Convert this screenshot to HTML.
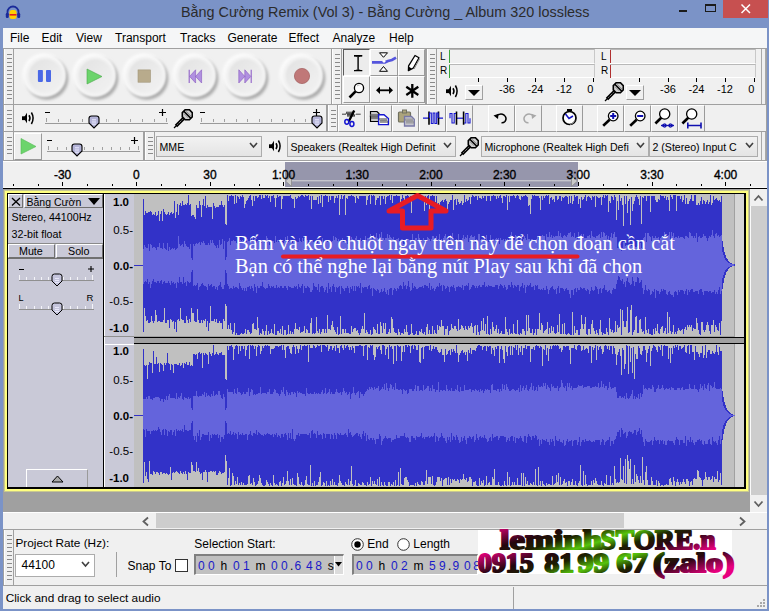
<!DOCTYPE html><html><head><meta charset="utf-8"><style>html,body{margin:0;padding:0;overflow:hidden}body{width:769px;height:611px;position:relative;background:#f0f0f0;font-family:'Liberation Sans', sans-serif}div,svg{box-sizing:border-box}</style></head><body>
<div style="position:absolute;left:0px;top:0px;width:769px;height:611px;background:#7b93c7"></div>
<svg style="position:absolute;left:5px;top:5px;" width="16" height="15" viewBox="0 0 16 15"><path d="M2.5 10 V7 A5.5 5.5 0 0 1 13.5 7 V10" fill="none" stroke="#1a2a9a" stroke-width="1.8"/><rect x="0.8" y="8" width="3" height="5" rx="1.2" fill="#1a2a9a"/><rect x="12.2" y="8" width="3" height="5" rx="1.2" fill="#1a2a9a"/><rect x="4.5" y="5" width="7" height="9" rx="2.5" fill="#ffd000"/><rect x="4.5" y="9" width="7" height="1.6" fill="#e02020"/></svg>
<div style="position:absolute;left:181px;top:5.37px;font-size:14.4px;line-height:14.4px;height:14.4px;color:#2b2b2b;white-space:nowrap;"><span style="position:relative;top:0">Bằng Cường Remix (Vol 3) - Bằng Cường _ Album 320 lossless</span></div>
<div style="position:absolute;left:679px;top:10px;width:8px;height:2px;background:#1b1b1b"></div>
<div style="position:absolute;left:705px;top:4px;width:11px;height:8px;border:1px solid #1b1b1b;border-top:2px solid #1b1b1b"></div>
<div style="position:absolute;left:723px;top:0px;width:45px;height:18px;background:#c75050"></div>
<svg style="position:absolute;left:739px;top:3px;" width="14" height="12" viewBox="0 0 14 12"><path d="M2.5 1.5 L11 10 M11 1.5 L2.5 10" stroke="#fff" stroke-width="1.5"/></svg>
<div style="position:absolute;left:3px;top:28px;width:764px;height:581px;background:#f0f0f0"></div>
<div style="position:absolute;left:3px;top:28px;width:764px;height:20px;background:#f5f6f7"></div>
<div style="position:absolute;left:3px;top:48px;width:764px;height:1px;background:#a0a0a0"></div>
<div style="position:absolute;left:10px;top:31.94px;font-size:12px;line-height:12px;height:12px;color:#000;white-space:nowrap;"><span style="position:relative;top:0">File</span></div>
<div style="position:absolute;left:41.5px;top:31.94px;font-size:12px;line-height:12px;height:12px;color:#000;white-space:nowrap;"><span style="position:relative;top:0">Edit</span></div>
<div style="position:absolute;left:76px;top:31.94px;font-size:12px;line-height:12px;height:12px;color:#000;white-space:nowrap;"><span style="position:relative;top:0">View</span></div>
<div style="position:absolute;left:115px;top:31.94px;font-size:12px;line-height:12px;height:12px;color:#000;white-space:nowrap;"><span style="position:relative;top:0">Transport</span></div>
<div style="position:absolute;left:180px;top:31.94px;font-size:12px;line-height:12px;height:12px;color:#000;white-space:nowrap;"><span style="position:relative;top:0">Tracks</span></div>
<div style="position:absolute;left:227.5px;top:31.94px;font-size:12px;line-height:12px;height:12px;color:#000;white-space:nowrap;"><span style="position:relative;top:0">Generate</span></div>
<div style="position:absolute;left:288.5px;top:31.94px;font-size:12px;line-height:12px;height:12px;color:#000;white-space:nowrap;"><span style="position:relative;top:0">Effect</span></div>
<div style="position:absolute;left:332.5px;top:31.94px;font-size:12px;line-height:12px;height:12px;color:#000;white-space:nowrap;"><span style="position:relative;top:0">Analyze</span></div>
<div style="position:absolute;left:389px;top:31.94px;font-size:12px;line-height:12px;height:12px;color:#000;white-space:nowrap;"><span style="position:relative;top:0">Help</span></div>
<div style="position:absolute;left:3px;top:49px;width:329px;height:56px;border-right:1px solid #a0a0a0;border-bottom:1px solid #a0a0a0"></div>
<div style="position:absolute;left:3px;top:49px;width:11px;height:55px;border-left:1px solid #a0a0a0;border-right:1px solid #a0a0a0"></div><div style="position:absolute;left:4px;top:49px;width:1px;height:55px;background:#fff"></div><div style="position:absolute;left:7px;top:54px;width:5px;height:1px;background:#8a8a8a"></div><div style="position:absolute;left:7px;top:58px;width:5px;height:1px;background:#8a8a8a"></div><div style="position:absolute;left:7px;top:62px;width:5px;height:1px;background:#8a8a8a"></div><div style="position:absolute;left:7px;top:66px;width:5px;height:1px;background:#8a8a8a"></div><div style="position:absolute;left:7px;top:70px;width:5px;height:1px;background:#8a8a8a"></div><div style="position:absolute;left:7px;top:74px;width:5px;height:1px;background:#8a8a8a"></div><div style="position:absolute;left:7px;top:78px;width:5px;height:1px;background:#8a8a8a"></div><div style="position:absolute;left:7px;top:82px;width:5px;height:1px;background:#8a8a8a"></div><div style="position:absolute;left:7px;top:86px;width:5px;height:1px;background:#8a8a8a"></div><div style="position:absolute;left:7px;top:90px;width:5px;height:1px;background:#8a8a8a"></div><div style="position:absolute;left:7px;top:94px;width:5px;height:1px;background:#8a8a8a"></div><div style="position:absolute;left:7px;top:98px;width:5px;height:1px;background:#8a8a8a"></div>
<svg style="position:absolute;left:18.5px;top:50px;" width="52" height="52" viewBox="0 0 52 52"><defs><filter id="b44" x="-30%" y="-30%" width="160%" height="160%"><feGaussianBlur stdDeviation="1.4"/></filter><filter id="c44" x="-30%" y="-30%" width="160%" height="160%"><feGaussianBlur stdDeviation="0.9"/></filter><linearGradient id="l44" x1="0" y1="0" x2="1" y2="1"><stop offset="0" stop-color="#e2e2e2"/><stop offset="1" stop-color="#f2f2f2"/></linearGradient></defs><circle cx="27.8" cy="28.2" r="21.5" fill="#a8a8a8" filter="url(#b44)"/><circle cx="25" cy="25" r="21.5" fill="#fdfdfd" filter="url(#b44)"/><circle cx="26" cy="26" r="20" fill="#f3f3f3" filter="url(#c44)"/><circle cx="26.5" cy="26" r="17" fill="url(#l44)" filter="url(#c44)"/><rect x="18.9" y="19.9" width="5" height="12" rx="0.8" fill="#4a68e6" transform="translate(0,0)"/><rect x="27" y="19.9" width="5" height="12" rx="0.8" fill="#4a68e6"/></svg>
<svg style="position:absolute;left:69px;top:50px;" width="52" height="52" viewBox="0 0 52 52"><defs><filter id="b95" x="-30%" y="-30%" width="160%" height="160%"><feGaussianBlur stdDeviation="1.4"/></filter><filter id="c95" x="-30%" y="-30%" width="160%" height="160%"><feGaussianBlur stdDeviation="0.9"/></filter><linearGradient id="l95" x1="0" y1="0" x2="1" y2="1"><stop offset="0" stop-color="#e2e2e2"/><stop offset="1" stop-color="#f2f2f2"/></linearGradient></defs><circle cx="27.8" cy="28.2" r="21.5" fill="#a8a8a8" filter="url(#b95)"/><circle cx="25" cy="25" r="21.5" fill="#fdfdfd" filter="url(#b95)"/><circle cx="26" cy="26" r="20" fill="#f3f3f3" filter="url(#c95)"/><circle cx="26.5" cy="26" r="17" fill="url(#l95)" filter="url(#c95)"/><path d="M18 19 L33 26.5 L18 34 Z" fill="#6cd46c" stroke="#4aa84a" stroke-width="0.6"/></svg>
<svg style="position:absolute;left:119px;top:50px;" width="52" height="52" viewBox="0 0 52 52"><defs><filter id="b145" x="-30%" y="-30%" width="160%" height="160%"><feGaussianBlur stdDeviation="1.4"/></filter><filter id="c145" x="-30%" y="-30%" width="160%" height="160%"><feGaussianBlur stdDeviation="0.9"/></filter><linearGradient id="l145" x1="0" y1="0" x2="1" y2="1"><stop offset="0" stop-color="#e2e2e2"/><stop offset="1" stop-color="#f2f2f2"/></linearGradient></defs><circle cx="27.8" cy="28.2" r="21.5" fill="#a8a8a8" filter="url(#b145)"/><circle cx="25" cy="25" r="21.5" fill="#fdfdfd" filter="url(#b145)"/><circle cx="26" cy="26" r="20" fill="#f3f3f3" filter="url(#c145)"/><circle cx="26.5" cy="26" r="17" fill="url(#l145)" filter="url(#c145)"/><rect x="19" y="19.9" width="12.5" height="12.3" fill="#b8ab8c" stroke="#a09478" stroke-width="0.6"/></svg>
<svg style="position:absolute;left:168.5px;top:50px;" width="52" height="52" viewBox="0 0 52 52"><defs><filter id="b194" x="-30%" y="-30%" width="160%" height="160%"><feGaussianBlur stdDeviation="1.4"/></filter><filter id="c194" x="-30%" y="-30%" width="160%" height="160%"><feGaussianBlur stdDeviation="0.9"/></filter><linearGradient id="l194" x1="0" y1="0" x2="1" y2="1"><stop offset="0" stop-color="#e2e2e2"/><stop offset="1" stop-color="#f2f2f2"/></linearGradient></defs><circle cx="27.8" cy="28.2" r="21.5" fill="#a8a8a8" filter="url(#b194)"/><circle cx="25" cy="25" r="21.5" fill="#fdfdfd" filter="url(#b194)"/><circle cx="26" cy="26" r="20" fill="#f3f3f3" filter="url(#c194)"/><circle cx="26.5" cy="26" r="17" fill="url(#l194)" filter="url(#c194)"/><path d="M20.2 19.8 V33" stroke="#9060c8" stroke-width="1.1"/><path d="M26.6 19.8 L20.6 26.4 L26.6 33 Z M32.6 19.8 L26.6 26.4 L32.6 33 Z" fill="#b090e0" stroke="#8858c0" stroke-width="0.6"/></svg>
<svg style="position:absolute;left:218.7px;top:50px;" width="52" height="52" viewBox="0 0 52 52"><defs><filter id="b244" x="-30%" y="-30%" width="160%" height="160%"><feGaussianBlur stdDeviation="1.4"/></filter><filter id="c244" x="-30%" y="-30%" width="160%" height="160%"><feGaussianBlur stdDeviation="0.9"/></filter><linearGradient id="l244" x1="0" y1="0" x2="1" y2="1"><stop offset="0" stop-color="#e2e2e2"/><stop offset="1" stop-color="#f2f2f2"/></linearGradient></defs><circle cx="27.8" cy="28.2" r="21.5" fill="#a8a8a8" filter="url(#b244)"/><circle cx="25" cy="25" r="21.5" fill="#fdfdfd" filter="url(#b244)"/><circle cx="26" cy="26" r="20" fill="#f3f3f3" filter="url(#c244)"/><circle cx="26.5" cy="26" r="17" fill="url(#l244)" filter="url(#c244)"/><path d="M32.2 19.8 V33" stroke="#9060c8" stroke-width="1.1"/><path d="M19.8 19.8 L25.8 26.4 L19.8 33 Z M25.8 19.8 L31.8 26.4 L25.8 33 Z" fill="#b090e0" stroke="#8858c0" stroke-width="0.6"/></svg>
<svg style="position:absolute;left:276px;top:50px;" width="52" height="52" viewBox="0 0 52 52"><defs><filter id="b302" x="-30%" y="-30%" width="160%" height="160%"><feGaussianBlur stdDeviation="1.4"/></filter><filter id="c302" x="-30%" y="-30%" width="160%" height="160%"><feGaussianBlur stdDeviation="0.9"/></filter><linearGradient id="l302" x1="0" y1="0" x2="1" y2="1"><stop offset="0" stop-color="#e2e2e2"/><stop offset="1" stop-color="#f2f2f2"/></linearGradient></defs><circle cx="27.8" cy="28.2" r="21.5" fill="#a8a8a8" filter="url(#b302)"/><circle cx="25" cy="25" r="21.5" fill="#fdfdfd" filter="url(#b302)"/><circle cx="26" cy="26" r="20" fill="#f3f3f3" filter="url(#c302)"/><circle cx="26.5" cy="26" r="17" fill="url(#l302)" filter="url(#c302)"/><circle cx="26" cy="26" r="7.6" fill="#c07878" stroke="#a05a5a" stroke-width="0.7"/></svg>
<div style="position:absolute;left:331px;top:49px;width:95px;height:56px;border-right:1px solid #a0a0a0;border-bottom:1px solid #a0a0a0"></div>
<div style="position:absolute;left:331px;top:49px;width:11px;height:55px;border-left:1px solid #a0a0a0;border-right:1px solid #a0a0a0"></div><div style="position:absolute;left:332px;top:49px;width:1px;height:55px;background:#fff"></div><div style="position:absolute;left:335px;top:54px;width:5px;height:1px;background:#8a8a8a"></div><div style="position:absolute;left:335px;top:58px;width:5px;height:1px;background:#8a8a8a"></div><div style="position:absolute;left:335px;top:62px;width:5px;height:1px;background:#8a8a8a"></div><div style="position:absolute;left:335px;top:66px;width:5px;height:1px;background:#8a8a8a"></div><div style="position:absolute;left:335px;top:70px;width:5px;height:1px;background:#8a8a8a"></div><div style="position:absolute;left:335px;top:74px;width:5px;height:1px;background:#8a8a8a"></div><div style="position:absolute;left:335px;top:78px;width:5px;height:1px;background:#8a8a8a"></div><div style="position:absolute;left:335px;top:82px;width:5px;height:1px;background:#8a8a8a"></div><div style="position:absolute;left:335px;top:86px;width:5px;height:1px;background:#8a8a8a"></div><div style="position:absolute;left:335px;top:90px;width:5px;height:1px;background:#8a8a8a"></div><div style="position:absolute;left:335px;top:94px;width:5px;height:1px;background:#8a8a8a"></div><div style="position:absolute;left:335px;top:98px;width:5px;height:1px;background:#8a8a8a"></div>
<div style="position:absolute;left:343px;top:49px;width:27px;height:27px;background:#ececec;border-top:1px solid #5a5a5a;border-left:1px solid #5a5a5a;border-right:1px solid #fff;border-bottom:1px solid #fff"></div>
<div style="position:absolute;left:370px;top:49px;width:28px;height:27px;background:#efefef;border-top:1px solid #fff;border-left:1px solid #fff;border-right:1px solid #9a9a9a;border-bottom:1px solid #9a9a9a"></div>
<div style="position:absolute;left:398px;top:49px;width:27px;height:27px;background:#efefef;border-top:1px solid #fff;border-left:1px solid #fff;border-right:1px solid #9a9a9a;border-bottom:1px solid #9a9a9a"></div>
<div style="position:absolute;left:343px;top:76px;width:27px;height:27px;background:#efefef;border-top:1px solid #fff;border-left:1px solid #fff;border-right:1px solid #9a9a9a;border-bottom:1px solid #9a9a9a"></div>
<div style="position:absolute;left:370px;top:76px;width:28px;height:27px;background:#efefef;border-top:1px solid #fff;border-left:1px solid #fff;border-right:1px solid #9a9a9a;border-bottom:1px solid #9a9a9a"></div>
<div style="position:absolute;left:398px;top:76px;width:27px;height:27px;background:#efefef;border-top:1px solid #fff;border-left:1px solid #fff;border-right:1px solid #9a9a9a;border-bottom:1px solid #9a9a9a"></div>
<svg style="position:absolute;left:343px;top:49px;" width="27" height="27" viewBox="0 0 27 27"><path d="M11 6.8 H19.2 M15.1 6.8 V21.6 M11 21.6 H19.2" stroke="#000" stroke-width="1.4" fill="none"/><path d="M11 6.8 Q13 6.8 14.4 7.6 M19.2 6.8 Q17.2 6.8 15.8 7.6 M11 21.6 Q13 21.6 14.4 20.8 M19.2 21.6 Q17.2 21.6 15.8 20.8" stroke="#000" stroke-width="0.9" fill="none"/></svg>
<svg style="position:absolute;left:370px;top:49px;" width="28" height="27" viewBox="0 0 28 27"><path d="M9.5 3.8 H17.5 L13.5 8.3 Z M9.5 22.3 H17.5 L13.5 17.5 Z" fill="#fff" stroke="#000" stroke-width="1"/><path d="M2 13.3 L15 13.3 L18 12 L22 11 L26 8.6" stroke="#5555dd" stroke-width="2.8" fill="none"/><circle cx="14" cy="12.3" r="1.4" fill="#fff"/></svg>
<svg style="position:absolute;left:398px;top:49px;" width="27" height="27" viewBox="0 0 27 27"><path d="M17 6.5 L21 8.8 L15.2 19.2 L10.4 21.6 L10.6 16.8 Z" fill="#fff" stroke="#000" stroke-width="1.3" stroke-linejoin="round"/><path d="M10.4 21.6 L10.6 17.6 L13.6 19.5 Z" fill="#000"/><path d="M21.5 10 L16 20" stroke="#888" stroke-width="1"/></svg>
<svg style="position:absolute;left:343px;top:76px;" width="27" height="27" viewBox="0 0 27 27"><circle cx="16" cy="12" r="4.6" fill="#fff" stroke="#000" stroke-width="1.3"/><path d="M12.6 15.4 L6.5 21.5" stroke="#000" stroke-width="2.6"/><path d="M14 10 Q15 9 16.5 9.2" stroke="#aaa" stroke-width="0.8" fill="none"/></svg>
<svg style="position:absolute;left:370px;top:76px;" width="28" height="27" viewBox="0 0 28 27"><path d="M8 14.3 H21" stroke="#000" stroke-width="1.8"/><path d="M6 14.3 L10 10.6 V18 Z M23 14.3 L19 10.6 V18 Z" fill="#000"/></svg>
<svg style="position:absolute;left:398px;top:76px;" width="27" height="27" viewBox="0 0 27 27"><path d="M14.3 8 V21.7 M8.3 10.8 L20.3 19 M20.3 10.8 L8.3 19" stroke="#000" stroke-width="2.3"/></svg>
<div style="position:absolute;left:426px;top:49px;width:341px;height:56px;border-right:1px solid #a0a0a0;border-bottom:1px solid #a0a0a0"></div>
<div style="position:absolute;left:426px;top:49px;width:11px;height:55px;border-left:1px solid #a0a0a0;border-right:1px solid #a0a0a0"></div><div style="position:absolute;left:427px;top:49px;width:1px;height:55px;background:#fff"></div><div style="position:absolute;left:430px;top:54px;width:5px;height:1px;background:#8a8a8a"></div><div style="position:absolute;left:430px;top:58px;width:5px;height:1px;background:#8a8a8a"></div><div style="position:absolute;left:430px;top:62px;width:5px;height:1px;background:#8a8a8a"></div><div style="position:absolute;left:430px;top:66px;width:5px;height:1px;background:#8a8a8a"></div><div style="position:absolute;left:430px;top:70px;width:5px;height:1px;background:#8a8a8a"></div><div style="position:absolute;left:430px;top:74px;width:5px;height:1px;background:#8a8a8a"></div><div style="position:absolute;left:430px;top:78px;width:5px;height:1px;background:#8a8a8a"></div><div style="position:absolute;left:430px;top:82px;width:5px;height:1px;background:#8a8a8a"></div><div style="position:absolute;left:430px;top:86px;width:5px;height:1px;background:#8a8a8a"></div><div style="position:absolute;left:430px;top:90px;width:5px;height:1px;background:#8a8a8a"></div><div style="position:absolute;left:430px;top:94px;width:5px;height:1px;background:#8a8a8a"></div><div style="position:absolute;left:430px;top:98px;width:5px;height:1px;background:#8a8a8a"></div>
<div style="position:absolute;left:761px;top:49px;width:1px;height:55px;background:#a8a8a8"></div>
<div style="position:absolute;left:765px;top:49px;width:1px;height:55px;background:#a8a8a8"></div>
<div style="position:absolute;left:440px;top:52.25px;font-size:10px;line-height:10px;height:10px;color:#000;white-space:nowrap;"><span style="position:relative;top:0">L</span></div><div style="position:absolute;left:440px;top:66.25px;font-size:10px;line-height:10px;height:10px;color:#000;white-space:nowrap;"><span style="position:relative;top:0">R</span></div><div style="position:absolute;left:449px;top:49px;width:146px;height:15px;background:#f0f0f0;border-top:1px solid #b8b8b8;border-right:1px solid #c8c8c8;border-bottom:1px solid #fff"></div><div style="position:absolute;left:449px;top:64px;width:146px;height:14px;background:#f0f0f0;border-top:1px solid #b8b8b8;border-right:1px solid #c8c8c8;border-bottom:1px solid #fff"></div><div style="position:absolute;left:449px;top:50px;width:1px;height:13px;background:#3aa83a"></div><div style="position:absolute;left:449px;top:65px;width:1px;height:13px;background:#3aa83a"></div>
<div style="position:absolute;left:601px;top:52.25px;font-size:10px;line-height:10px;height:10px;color:#000;white-space:nowrap;"><span style="position:relative;top:0">L</span></div><div style="position:absolute;left:601px;top:66.25px;font-size:10px;line-height:10px;height:10px;color:#000;white-space:nowrap;"><span style="position:relative;top:0">R</span></div><div style="position:absolute;left:610px;top:49px;width:146px;height:15px;background:#f0f0f0;border-top:1px solid #b8b8b8;border-right:1px solid #c8c8c8;border-bottom:1px solid #fff"></div><div style="position:absolute;left:610px;top:64px;width:146px;height:14px;background:#f0f0f0;border-top:1px solid #b8b8b8;border-right:1px solid #c8c8c8;border-bottom:1px solid #fff"></div><div style="position:absolute;left:610px;top:50px;width:1px;height:13px;background:#b03030"></div><div style="position:absolute;left:610px;top:65px;width:1px;height:13px;background:#b03030"></div>
<div style="position:absolute;left:478px;top:78px;width:1px;height:4px;background:#000"></div><div style="position:absolute;left:507px;top:78px;width:1px;height:4px;background:#000"></div><div style="position:absolute;left:535px;top:78px;width:1px;height:4px;background:#000"></div><div style="position:absolute;left:564px;top:78px;width:1px;height:4px;background:#000"></div><div style="position:absolute;left:593px;top:78px;width:1px;height:4px;background:#000"></div>
<div style="position:absolute;left:639px;top:78px;width:1px;height:4px;background:#000"></div><div style="position:absolute;left:668px;top:78px;width:1px;height:4px;background:#000"></div><div style="position:absolute;left:696px;top:78px;width:1px;height:4px;background:#000"></div><div style="position:absolute;left:725px;top:78px;width:1px;height:4px;background:#000"></div><div style="position:absolute;left:754px;top:78px;width:1px;height:4px;background:#000"></div>
<div style="position:absolute;left:499px;top:83.84px;font-size:11px;line-height:11px;height:11px;color:#000;white-space:nowrap;"><span style="position:relative;top:0">-36</span></div>
<div style="position:absolute;left:527.5px;top:83.84px;font-size:11px;line-height:11px;height:11px;color:#000;white-space:nowrap;"><span style="position:relative;top:0">-24</span></div>
<div style="position:absolute;left:556px;top:83.84px;font-size:11px;line-height:11px;height:11px;color:#000;white-space:nowrap;"><span style="position:relative;top:0">-12</span></div>
<div style="position:absolute;left:587.3px;top:83.84px;font-size:11px;line-height:11px;height:11px;color:#000;white-space:nowrap;"><span style="position:relative;top:0">0</span></div>
<div style="position:absolute;left:660px;top:83.84px;font-size:11px;line-height:11px;height:11px;color:#000;white-space:nowrap;"><span style="position:relative;top:0">-36</span></div>
<div style="position:absolute;left:688.5px;top:83.84px;font-size:11px;line-height:11px;height:11px;color:#000;white-space:nowrap;"><span style="position:relative;top:0">-24</span></div>
<div style="position:absolute;left:717px;top:83.84px;font-size:11px;line-height:11px;height:11px;color:#000;white-space:nowrap;"><span style="position:relative;top:0">-12</span></div>
<div style="position:absolute;left:748.2px;top:83.84px;font-size:11px;line-height:11px;height:11px;color:#000;white-space:nowrap;"><span style="position:relative;top:0">0</span></div>
<svg style="position:absolute;left:445px;top:84px;" width="15" height="15" viewBox="0 0 15 15"><rect x="1" y="5.3" width="3" height="3.8" fill="#000"/><path d="M3.8 5.3 L6 1.8 V12.3 L3.8 9 Z" fill="#000"/><path d="M8 4.3 Q10 7.2 8 10.2" stroke="#000" stroke-width="1.5" fill="none"/><path d="M10.4 1.5 Q13.8 7.2 10.4 13" stroke="#000" stroke-width="1.5" fill="none"/></svg>
<div style="position:absolute;left:465px;top:85px;width:18px;height:15px;background:#f0f0f0;border-top:1px solid #fff;border-left:1px solid #fff;border-right:1px solid #a0a0a0;border-bottom:1px solid #a0a0a0"></div><svg style="position:absolute;left:468px;top:90px;" width="12" height="7" viewBox="0 0 12 7"><path d="M0 0 H12 L6.0 6 Z" fill="#000"/></svg>
<svg style="position:absolute;left:604px;top:82px;" width="20" height="20" viewBox="0 0 20 20"><path d="M1 19 L3.5 16.5" stroke="#000" stroke-width="1.3"/><path d="M3 17 L10.5 9.5" stroke="#000" stroke-width="3.4"/><path d="M4.5 15.5 L10 10" stroke="#fff" stroke-width="0.8" stroke-dasharray="1 1"/><polygon points="12.2,0.7 16.4,0.7 19.3,3.6 19.3,7.8 16.4,10.7 12.2,10.7 9.3,7.8 9.3,3.6" fill="#cfcfcf" stroke="#000" stroke-width="1.6"/><path d="M10.8 2.2 L17.8 9.2" stroke="#000" stroke-width="1.6"/><path d="M13.2 2.4 L18 7.2 M11 4.6 L15.2 8.8" stroke="#8a8a8a" stroke-width="1"/></svg>
<div style="position:absolute;left:626px;top:85px;width:18px;height:15px;background:#f0f0f0;border-top:1px solid #fff;border-left:1px solid #fff;border-right:1px solid #a0a0a0;border-bottom:1px solid #a0a0a0"></div><svg style="position:absolute;left:629px;top:90px;" width="12" height="7" viewBox="0 0 12 7"><path d="M0 0 H12 L6.0 6 Z" fill="#000"/></svg>
<div style="position:absolute;left:3px;top:105px;width:324px;height:27px;border-right:1px solid #a0a0a0;border-bottom:1px solid #a0a0a0"></div>
<div style="position:absolute;left:3px;top:105px;width:11px;height:26px;border-left:1px solid #a0a0a0;border-right:1px solid #a0a0a0"></div><div style="position:absolute;left:4px;top:105px;width:1px;height:26px;background:#fff"></div><div style="position:absolute;left:7px;top:110px;width:5px;height:1px;background:#8a8a8a"></div><div style="position:absolute;left:7px;top:114px;width:5px;height:1px;background:#8a8a8a"></div><div style="position:absolute;left:7px;top:118px;width:5px;height:1px;background:#8a8a8a"></div><div style="position:absolute;left:7px;top:122px;width:5px;height:1px;background:#8a8a8a"></div><div style="position:absolute;left:7px;top:126px;width:5px;height:1px;background:#8a8a8a"></div>
<svg style="position:absolute;left:21px;top:111px;" width="15" height="15" viewBox="0 0 15 15"><rect x="1" y="5.3" width="3" height="3.8" fill="#000"/><path d="M3.8 5.3 L6 1.8 V12.3 L3.8 9 Z" fill="#000"/><path d="M8 4.3 Q10 7.2 8 10.2" stroke="#000" stroke-width="1.5" fill="none"/><path d="M10.4 1.5 Q13.8 7.2 10.4 13" stroke="#000" stroke-width="1.5" fill="none"/></svg>
<div style="position:absolute;left:45px;top:123px;width:123px;height:1px;background:#9a9a9a"></div><div style="position:absolute;left:46px;top:118px;width:1px;height:4px;background:#a0a0a0"></div><div style="position:absolute;left:58px;top:119px;width:1px;height:3px;background:#a0a0a0"></div><div style="position:absolute;left:70px;top:119px;width:1px;height:3px;background:#a0a0a0"></div><div style="position:absolute;left:82px;top:119px;width:1px;height:3px;background:#a0a0a0"></div><div style="position:absolute;left:94px;top:119px;width:1px;height:3px;background:#a0a0a0"></div><div style="position:absolute;left:106px;top:119px;width:1px;height:3px;background:#a0a0a0"></div><div style="position:absolute;left:118px;top:119px;width:1px;height:3px;background:#a0a0a0"></div><div style="position:absolute;left:130px;top:119px;width:1px;height:3px;background:#a0a0a0"></div><div style="position:absolute;left:142px;top:119px;width:1px;height:3px;background:#a0a0a0"></div><div style="position:absolute;left:154px;top:119px;width:1px;height:3px;background:#a0a0a0"></div><div style="position:absolute;left:166px;top:118px;width:1px;height:4px;background:#a0a0a0"></div><svg style="position:absolute;left:88px;top:115px;" width="12" height="14" viewBox="0 0 12 14"><path d="M1 3.5 Q1 1 3.5 1 H8.5 Q11 1 11 3.5 V8 L6 13 L1 8 Z" fill="#b4b4d8" stroke="#000" stroke-width="1.1"/><path d="M4 4.8 H8 M4 7 H8 M4 9.2 H8" stroke="#ececff" stroke-width="1"/></svg>
<div style="position:absolute;left:45px;top:112px;width:5px;height:1px;background:#000"></div>
<svg style="position:absolute;left:159px;top:109px;" width="7" height="7" viewBox="0 0 7 7"><path d="M3.5 0 V7 M0 3.5 H7" stroke="#000" stroke-width="1.2"/></svg>
<svg style="position:absolute;left:173px;top:109px;" width="20" height="20" viewBox="0 0 20 20"><path d="M1 19 L3.5 16.5" stroke="#000" stroke-width="1.3"/><path d="M3 17 L10.5 9.5" stroke="#000" stroke-width="3.4"/><path d="M4.5 15.5 L10 10" stroke="#fff" stroke-width="0.8" stroke-dasharray="1 1"/><polygon points="12.2,0.7 16.4,0.7 19.3,3.6 19.3,7.8 16.4,10.7 12.2,10.7 9.3,7.8 9.3,3.6" fill="#cfcfcf" stroke="#000" stroke-width="1.6"/><path d="M10.8 2.2 L17.8 9.2" stroke="#000" stroke-width="1.6"/><path d="M13.2 2.4 L18 7.2 M11 4.6 L15.2 8.8" stroke="#8a8a8a" stroke-width="1"/></svg>
<div style="position:absolute;left:200px;top:123px;width:119px;height:1px;background:#9a9a9a"></div><div style="position:absolute;left:201px;top:118px;width:1px;height:4px;background:#a0a0a0"></div><div style="position:absolute;left:213px;top:119px;width:1px;height:3px;background:#a0a0a0"></div><div style="position:absolute;left:224px;top:119px;width:1px;height:3px;background:#a0a0a0"></div><div style="position:absolute;left:236px;top:119px;width:1px;height:3px;background:#a0a0a0"></div><div style="position:absolute;left:247px;top:119px;width:1px;height:3px;background:#a0a0a0"></div><div style="position:absolute;left:259px;top:119px;width:1px;height:3px;background:#a0a0a0"></div><div style="position:absolute;left:271px;top:119px;width:1px;height:3px;background:#a0a0a0"></div><div style="position:absolute;left:282px;top:119px;width:1px;height:3px;background:#a0a0a0"></div><div style="position:absolute;left:294px;top:119px;width:1px;height:3px;background:#a0a0a0"></div><div style="position:absolute;left:305px;top:119px;width:1px;height:3px;background:#a0a0a0"></div><div style="position:absolute;left:317px;top:118px;width:1px;height:4px;background:#a0a0a0"></div><svg style="position:absolute;left:311px;top:115px;" width="12" height="14" viewBox="0 0 12 14"><path d="M1 3.5 Q1 1 3.5 1 H8.5 Q11 1 11 3.5 V8 L6 13 L1 8 Z" fill="#b4b4d8" stroke="#000" stroke-width="1.1"/><path d="M4 4.8 H8 M4 7 H8 M4 9.2 H8" stroke="#ececff" stroke-width="1"/></svg>
<div style="position:absolute;left:200px;top:112px;width:5px;height:1px;background:#000"></div>
<svg style="position:absolute;left:313px;top:109px;" width="7" height="7" viewBox="0 0 7 7"><path d="M3.5 0 V7 M0 3.5 H7" stroke="#000" stroke-width="1.2"/></svg>
<div style="position:absolute;left:327px;top:105px;width:440px;height:27px;border-right:1px solid #a0a0a0;border-bottom:1px solid #a0a0a0"></div>
<div style="position:absolute;left:327px;top:105px;width:11px;height:26px;border-left:1px solid #a0a0a0;border-right:1px solid #a0a0a0"></div><div style="position:absolute;left:328px;top:105px;width:1px;height:26px;background:#fff"></div><div style="position:absolute;left:331px;top:110px;width:5px;height:1px;background:#8a8a8a"></div><div style="position:absolute;left:331px;top:114px;width:5px;height:1px;background:#8a8a8a"></div><div style="position:absolute;left:331px;top:118px;width:5px;height:1px;background:#8a8a8a"></div><div style="position:absolute;left:331px;top:122px;width:5px;height:1px;background:#8a8a8a"></div><div style="position:absolute;left:331px;top:126px;width:5px;height:1px;background:#8a8a8a"></div>
<div style="position:absolute;left:338px;top:105px;width:27px;height:27px;background:#efefef;border-top:1px solid #fff;border-left:1px solid #fff;border-right:1px solid #9a9a9a;border-bottom:1px solid #9a9a9a"></div>
<div style="position:absolute;left:365px;top:105px;width:27px;height:27px;background:#efefef;border-top:1px solid #fff;border-left:1px solid #fff;border-right:1px solid #9a9a9a;border-bottom:1px solid #9a9a9a"></div>
<div style="position:absolute;left:392px;top:105px;width:27px;height:27px;background:#efefef;border-top:1px solid #fff;border-left:1px solid #fff;border-right:1px solid #9a9a9a;border-bottom:1px solid #9a9a9a"></div>
<div style="position:absolute;left:419px;top:105px;width:27px;height:27px;background:#efefef;border-top:1px solid #fff;border-left:1px solid #fff;border-right:1px solid #9a9a9a;border-bottom:1px solid #9a9a9a"></div>
<div style="position:absolute;left:446px;top:105px;width:27px;height:27px;background:#efefef;border-top:1px solid #fff;border-left:1px solid #fff;border-right:1px solid #9a9a9a;border-bottom:1px solid #9a9a9a"></div>
<div style="position:absolute;left:488px;top:105px;width:27px;height:27px;background:#efefef;border-top:1px solid #fff;border-left:1px solid #fff;border-right:1px solid #9a9a9a;border-bottom:1px solid #9a9a9a"></div>
<div style="position:absolute;left:515px;top:105px;width:27px;height:27px;background:#efefef;border-top:1px solid #fff;border-left:1px solid #fff;border-right:1px solid #9a9a9a;border-bottom:1px solid #9a9a9a"></div>
<div style="position:absolute;left:556px;top:105px;width:27px;height:27px;background:#efefef;border-top:1px solid #fff;border-left:1px solid #fff;border-right:1px solid #9a9a9a;border-bottom:1px solid #9a9a9a"></div>
<div style="position:absolute;left:597px;top:105px;width:27px;height:27px;background:#efefef;border-top:1px solid #fff;border-left:1px solid #fff;border-right:1px solid #9a9a9a;border-bottom:1px solid #9a9a9a"></div>
<div style="position:absolute;left:624px;top:105px;width:27px;height:27px;background:#efefef;border-top:1px solid #fff;border-left:1px solid #fff;border-right:1px solid #9a9a9a;border-bottom:1px solid #9a9a9a"></div>
<div style="position:absolute;left:651px;top:105px;width:27px;height:27px;background:#efefef;border-top:1px solid #fff;border-left:1px solid #fff;border-right:1px solid #9a9a9a;border-bottom:1px solid #9a9a9a"></div>
<div style="position:absolute;left:678px;top:105px;width:27px;height:27px;background:#efefef;border-top:1px solid #fff;border-left:1px solid #fff;border-right:1px solid #9a9a9a;border-bottom:1px solid #9a9a9a"></div>
<svg style="position:absolute;left:338px;top:105px;" width="27" height="27" viewBox="0 0 27 27"><path d="M4 9.2 H8 M18 9.2 H22.7" stroke="#404040" stroke-width="1"/><path d="M8 9.2 l1 -2.5 l1 5 l1 -5 l1 5 l1 -5 l1 5 l1 -5 l1 5 l1 -2.5" stroke="#404040" stroke-width="1" fill="none"/><path d="M16.2 5.5 L11.6 14.8 L10.6 16.5" stroke="#000" stroke-width="2.4"/><ellipse cx="8.8" cy="16.8" rx="2" ry="2.4" stroke="#1515d0" stroke-width="1.5" fill="none"/><ellipse cx="13.9" cy="19" rx="2" ry="2.4" stroke="#1515d0" stroke-width="1.5" fill="none"/></svg>
<svg style="position:absolute;left:365px;top:105px;" width="27" height="27" viewBox="0 0 27 27"><path d="M5.5 6.5 H12 L14 8.5 V16.5 H5.5 Z" fill="#c8c8c8" stroke="#000" stroke-width="1.2"/><path d="M5 11.5 l1 -2.5 l1 5 l1 -5 l1 5 l1 -5 l1 5 l1 -5 l1 5 l1 -2.5" stroke="#555" stroke-width="0.8" fill="none"/><path d="M13.6 9.8 H19 L23.4 13.5 V19.6 H13.6 Z" fill="#fff" stroke="#1515d0" stroke-width="1.4"/><path d="M14 15.5 l1 -2.5 l1 5 l1 -5 l1 5 l1 -5 l1 5 l1 -5 l1 5 l1 -2.5" stroke="#666" stroke-width="0.8" fill="none"/></svg>
<svg style="position:absolute;left:392px;top:105px;" width="27" height="27" viewBox="0 0 27 27"><rect x="6.5" y="7" width="12" height="10" rx="1" fill="#aca47c" stroke="#707060" stroke-width="1.2"/><rect x="10.5" y="5" width="4" height="3" fill="#aca47c" stroke="#707060" stroke-width="1"/><path d="M12.5 11.5 H19.5 L22.3 14.3 V21 H12.5 Z" fill="#c4c4cc" stroke="#7878a8" stroke-width="1.3"/><path d="M13 16 l1 -2.5 l1 5 l1 -5 l1 5 l1 -5 l1 5 l1 -5 l1 5 l1 -2.5" stroke="#888" stroke-width="0.7" fill="none"/></svg>
<svg style="position:absolute;left:419px;top:105px;" width="27" height="27" viewBox="0 0 27 27"><path d="M4 13.2 H10 M19.5 13.2 H24" stroke="#1515d0" stroke-width="1.2"/><path d="M10 6.5 V19.8 M19.5 6.5 V19.8" stroke="#000" stroke-width="1.6"/><path d="M10.5 13 V8 H12.3 V18.5 H14.1 V8 H15.9 V18.5 H17.7 V8 H19.2 V13" stroke="#1515d0" stroke-width="1.1" fill="none"/></svg>
<svg style="position:absolute;left:446px;top:105px;" width="27" height="27" viewBox="0 0 27 27"><path d="M10.5 13.2 H17.6" stroke="#1515d0" stroke-width="1.2"/><path d="M10.5 6.5 V19.8 M17.6 6.5 V19.8" stroke="#000" stroke-width="1.6"/><path d="M4 13.2 V8.5 H6 V18 H8.2 V8.5 H10 M18 18 H19.8 V8.5 H22 V18 H24 V13.2" stroke="#1515d0" stroke-width="1.1" fill="none"/></svg>
<svg style="position:absolute;left:488px;top:105px;" width="27" height="27" viewBox="0 0 27 27"><path d="M8 11.5 Q12 7.5 16 10 Q19.5 13 17 16.5 Q15.5 18 13.5 17.8" stroke="#000" stroke-width="1.5" fill="none"/><path d="M5.5 10.5 L10.5 8.8 L10 14 Z" fill="#000"/></svg>
<svg style="position:absolute;left:515px;top:105px;" width="27" height="27" viewBox="0 0 27 27"><path d="M19 11.5 Q15 7.5 11 10 Q7.5 13 10 16.5 Q11.5 18 13.5 17.8" stroke="#a8a8a8" stroke-width="1.5" fill="none"/><path d="M21.5 10.5 L16.5 8.8 L17 14 Z" fill="#a8a8a8"/></svg>
<svg style="position:absolute;left:556px;top:105px;" width="27" height="27" viewBox="0 0 27 27"><circle cx="13.5" cy="13" r="6.5" fill="#fff" stroke="#000" stroke-width="1.7"/><rect x="11" y="4" width="5" height="2" fill="#000"/><path d="M13.5 5.5 V7" stroke="#000" stroke-width="1.5"/><path d="M9.5 9 L13 13.5 L17 11" stroke="#1515c0" stroke-width="1.5" fill="none"/><path d="M19 15 A6.5 6.5 0 0 1 14 19.5" stroke="#888" stroke-width="1" fill="none"/></svg>
<svg style="position:absolute;left:597px;top:105px;" width="27" height="27" viewBox="0 0 27 27"><path d="M12.6 14.8 L6.2 20.8" stroke="#000" stroke-width="2.6"/><circle cx="16.2" cy="11" r="4.8" fill="#fff" stroke="#000" stroke-width="1.3"/><path d="M13.2 11 H19.2 M16.2 8 V14" stroke="#1010b0" stroke-width="2"/></svg>
<svg style="position:absolute;left:624px;top:105px;" width="27" height="27" viewBox="0 0 27 27"><path d="M12.6 14.8 L6.2 20.8" stroke="#000" stroke-width="2.6"/><circle cx="16.2" cy="11" r="4.8" fill="#fff" stroke="#000" stroke-width="1.3"/><path d="M13.2 11 H19.2" stroke="#1010b0" stroke-width="2"/></svg>
<svg style="position:absolute;left:651px;top:105px;" width="27" height="27" viewBox="0 0 27 27"><path d="M10.5 12.5 L4.4 18.5" stroke="#000" stroke-width="2.6"/><circle cx="13.7" cy="9" r="5.1" fill="#fff" stroke="#000" stroke-width="1.3"/><path d="M10 20.5 H23" stroke="#1010b0" stroke-width="1.3"/><path d="M10 20.5 L13.5 18 V23 Z M23 20.5 L19.5 18 V23 Z M16.5 20.5 L13.8 18 V23 Z M16.5 20.5 L19.2 18 V23 Z" fill="#1010b0"/></svg>
<svg style="position:absolute;left:678px;top:105px;" width="27" height="27" viewBox="0 0 27 27"><path d="M10.5 12.5 L4.4 18.5" stroke="#000" stroke-width="2.6"/><circle cx="13.7" cy="9" r="5.1" fill="#fff" stroke="#000" stroke-width="1.3"/><path d="M9.6 20.5 H23.2 M9.8 17.5 V23.5 M23 17.5 V23.5" stroke="#1010b0" stroke-width="1.6"/></svg>
<div style="position:absolute;left:3px;top:132px;width:141px;height:29px;border-right:1px solid #a0a0a0;border-bottom:1px solid #a0a0a0"></div>
<div style="position:absolute;left:3px;top:132px;width:11px;height:28px;border-left:1px solid #a0a0a0;border-right:1px solid #a0a0a0"></div><div style="position:absolute;left:4px;top:132px;width:1px;height:28px;background:#fff"></div><div style="position:absolute;left:7px;top:137px;width:5px;height:1px;background:#8a8a8a"></div><div style="position:absolute;left:7px;top:141px;width:5px;height:1px;background:#8a8a8a"></div><div style="position:absolute;left:7px;top:145px;width:5px;height:1px;background:#8a8a8a"></div><div style="position:absolute;left:7px;top:149px;width:5px;height:1px;background:#8a8a8a"></div><div style="position:absolute;left:7px;top:153px;width:5px;height:1px;background:#8a8a8a"></div>
<div style="position:absolute;left:14px;top:133px;width:28px;height:27px;background:#efefef;border-top:1px solid #fff;border-left:1px solid #fff;border-right:1px solid #9a9a9a;border-bottom:1px solid #9a9a9a"></div>
<svg style="position:absolute;left:14px;top:133px;" width="28" height="27" viewBox="0 0 28 27"><path d="M7 5.5 L22 13.5 L7 21 Z" fill="#6cd46c" stroke="#56b856" stroke-width="0.6"/></svg>
<div style="position:absolute;left:47px;top:151px;width:93px;height:1px;background:#9a9a9a"></div><div style="position:absolute;left:48px;top:146px;width:1px;height:4px;background:#a0a0a0"></div><div style="position:absolute;left:57px;top:147px;width:1px;height:3px;background:#a0a0a0"></div><div style="position:absolute;left:66px;top:147px;width:1px;height:3px;background:#a0a0a0"></div><div style="position:absolute;left:75px;top:147px;width:1px;height:3px;background:#a0a0a0"></div><div style="position:absolute;left:84px;top:147px;width:1px;height:3px;background:#a0a0a0"></div><div style="position:absolute;left:93px;top:147px;width:1px;height:3px;background:#a0a0a0"></div><div style="position:absolute;left:102px;top:147px;width:1px;height:3px;background:#a0a0a0"></div><div style="position:absolute;left:111px;top:147px;width:1px;height:3px;background:#a0a0a0"></div><div style="position:absolute;left:120px;top:147px;width:1px;height:3px;background:#a0a0a0"></div><div style="position:absolute;left:129px;top:147px;width:1px;height:3px;background:#a0a0a0"></div><div style="position:absolute;left:138px;top:146px;width:1px;height:4px;background:#a0a0a0"></div><svg style="position:absolute;left:71px;top:143px;" width="12" height="14" viewBox="0 0 12 14"><path d="M1 3.5 Q1 1 3.5 1 H8.5 Q11 1 11 3.5 V8 L6 13 L1 8 Z" fill="#b4b4d8" stroke="#000" stroke-width="1.1"/><path d="M4 4.8 H8 M4 7 H8 M4 9.2 H8" stroke="#ececff" stroke-width="1"/></svg>
<div style="position:absolute;left:47px;top:140px;width:5px;height:1px;background:#000"></div>
<svg style="position:absolute;left:131px;top:137px;" width="7" height="7" viewBox="0 0 7 7"><path d="M3.5 0 V7 M0 3.5 H7" stroke="#000" stroke-width="1.2"/></svg>
<div style="position:absolute;left:144px;top:132px;width:623px;height:29px;border-right:1px solid #a0a0a0;border-bottom:1px solid #a0a0a0"></div>
<div style="position:absolute;left:144px;top:132px;width:11px;height:28px;border-left:1px solid #a0a0a0;border-right:1px solid #a0a0a0"></div><div style="position:absolute;left:145px;top:132px;width:1px;height:28px;background:#fff"></div><div style="position:absolute;left:148px;top:137px;width:5px;height:1px;background:#8a8a8a"></div><div style="position:absolute;left:148px;top:141px;width:5px;height:1px;background:#8a8a8a"></div><div style="position:absolute;left:148px;top:145px;width:5px;height:1px;background:#8a8a8a"></div><div style="position:absolute;left:148px;top:149px;width:5px;height:1px;background:#8a8a8a"></div><div style="position:absolute;left:148px;top:153px;width:5px;height:1px;background:#8a8a8a"></div>
<div style="position:absolute;left:761px;top:132px;width:1px;height:28px;background:#a8a8a8"></div>
<div style="position:absolute;left:765px;top:132px;width:1px;height:28px;background:#a8a8a8"></div>
<div style="position:absolute;left:156px;top:136px;width:106px;height:21px;background:linear-gradient(#f2f2f2,#e4e4e4);border:1px solid #acacac"></div><div style="position:absolute;left:159.5px;top:142.11px;font-size:10.6px;line-height:10.6px;height:10.6px;color:#000;white-space:nowrap;"><span style="position:relative;top:0">MME</span></div><svg style="position:absolute;left:249px;top:142px;" width="9" height="7" viewBox="0 0 9 7"><path d="M1 1 L4.5 5 L8 1" stroke="#404040" stroke-width="1.6" fill="none"/></svg>
<svg style="position:absolute;left:268px;top:139px;" width="15" height="15" viewBox="0 0 15 15"><rect x="1" y="5.3" width="3" height="3.8" fill="#000"/><path d="M3.8 5.3 L6 1.8 V12.3 L3.8 9 Z" fill="#000"/><path d="M8 4.3 Q10 7.2 8 10.2" stroke="#000" stroke-width="1.5" fill="none"/><path d="M10.4 1.5 Q13.8 7.2 10.4 13" stroke="#000" stroke-width="1.5" fill="none"/></svg>
<div style="position:absolute;left:287px;top:136px;width:169px;height:21px;background:linear-gradient(#f2f2f2,#e4e4e4);border:1px solid #acacac"></div><div style="position:absolute;left:290.5px;top:142.11px;font-size:10.6px;line-height:10.6px;height:10.6px;color:#000;white-space:nowrap;"><span style="position:relative;top:0">Speakers (Realtek High Definit</span></div><svg style="position:absolute;left:443px;top:142px;" width="9" height="7" viewBox="0 0 9 7"><path d="M1 1 L4.5 5 L8 1" stroke="#404040" stroke-width="1.6" fill="none"/></svg>
<svg style="position:absolute;left:459px;top:137px;" width="20" height="20" viewBox="0 0 20 20"><path d="M1 19 L3.5 16.5" stroke="#000" stroke-width="1.3"/><path d="M3 17 L10.5 9.5" stroke="#000" stroke-width="3.4"/><path d="M4.5 15.5 L10 10" stroke="#fff" stroke-width="0.8" stroke-dasharray="1 1"/><polygon points="12.2,0.7 16.4,0.7 19.3,3.6 19.3,7.8 16.4,10.7 12.2,10.7 9.3,7.8 9.3,3.6" fill="#cfcfcf" stroke="#000" stroke-width="1.6"/><path d="M10.8 2.2 L17.8 9.2" stroke="#000" stroke-width="1.6"/><path d="M13.2 2.4 L18 7.2 M11 4.6 L15.2 8.8" stroke="#8a8a8a" stroke-width="1"/></svg>
<div style="position:absolute;left:481px;top:136px;width:168px;height:21px;background:linear-gradient(#f2f2f2,#e4e4e4);border:1px solid #acacac"></div><div style="position:absolute;left:484.5px;top:142.11px;font-size:10.6px;line-height:10.6px;height:10.6px;color:#000;white-space:nowrap;"><span style="position:relative;top:0">Microphone (Realtek High Defi</span></div><svg style="position:absolute;left:636px;top:142px;" width="9" height="7" viewBox="0 0 9 7"><path d="M1 1 L4.5 5 L8 1" stroke="#404040" stroke-width="1.6" fill="none"/></svg>
<div style="position:absolute;left:649px;top:136px;width:109px;height:21px;background:linear-gradient(#f2f2f2,#e4e4e4);border:1px solid #acacac"></div><div style="position:absolute;left:652.5px;top:142.11px;font-size:10.6px;line-height:10.6px;height:10.6px;color:#000;white-space:nowrap;"><span style="position:relative;top:0">2 (Stereo) Input C</span></div><svg style="position:absolute;left:745px;top:142px;" width="9" height="7" viewBox="0 0 9 7"><path d="M1 1 L4.5 5 L8 1" stroke="#404040" stroke-width="1.6" fill="none"/></svg>
<div style="position:absolute;left:3px;top:161px;width:764px;height:27px;background:#f0f0f0"></div>
<div style="position:absolute;left:3px;top:187px;width:764px;height:1px;background:#fafafa"></div>
<div style="position:absolute;left:3px;top:188px;width:764px;height:1px;background:#000"></div>
<div style="position:absolute;left:3px;top:161px;width:764px;height:1px;background:#fff"></div>
<div style="position:absolute;left:285px;top:162px;width:293px;height:25px;background:#9696ac"></div>
<div style="position:absolute;left:291px;top:180px;width:280px;height:1px;background:#c4c4cc"></div>
<div style="position:absolute;left:291px;top:181px;width:280px;height:1px;background:#a8a8b8"></div>
<svg style="position:absolute;left:285px;top:175px;" width="8" height="12" viewBox="0 0 8 12"><path d="M6.5 0.5 L0.5 6 L6.5 11.5 Z" fill="#cacaca" stroke="#8a8a8a" stroke-width="0.8"/></svg>
<svg style="position:absolute;left:571px;top:175px;" width="8" height="12" viewBox="0 0 8 12"><path d="M0.5 0.5 L6.5 6 L0.5 11.5 Z" fill="#cacaca" stroke="#8a8a8a" stroke-width="0.8"/></svg>
<div style="position:absolute;left:13px;top:184px;width:1px;height:2px;background:#000"></div>
<div style="position:absolute;left:38px;top:184px;width:1px;height:2px;background:#000"></div>
<div style="position:absolute;left:62px;top:182px;width:1px;height:4px;background:#000"></div>
<div style="position:absolute;left:87px;top:184px;width:1px;height:2px;background:#000"></div>
<div style="position:absolute;left:112px;top:184px;width:1px;height:2px;background:#000"></div>
<div style="position:absolute;left:136px;top:182px;width:1px;height:4px;background:#000"></div>
<div style="position:absolute;left:161px;top:184px;width:1px;height:2px;background:#000"></div>
<div style="position:absolute;left:185px;top:184px;width:1px;height:2px;background:#000"></div>
<div style="position:absolute;left:210px;top:182px;width:1px;height:4px;background:#000"></div>
<div style="position:absolute;left:234px;top:184px;width:1px;height:2px;background:#000"></div>
<div style="position:absolute;left:259px;top:184px;width:1px;height:2px;background:#000"></div>
<div style="position:absolute;left:283px;top:182px;width:1px;height:4px;background:#000"></div>
<div style="position:absolute;left:308px;top:184px;width:1px;height:2px;background:#000"></div>
<div style="position:absolute;left:333px;top:184px;width:1px;height:2px;background:#000"></div>
<div style="position:absolute;left:357px;top:182px;width:1px;height:4px;background:#000"></div>
<div style="position:absolute;left:382px;top:184px;width:1px;height:2px;background:#000"></div>
<div style="position:absolute;left:406px;top:184px;width:1px;height:2px;background:#000"></div>
<div style="position:absolute;left:431px;top:182px;width:1px;height:4px;background:#000"></div>
<div style="position:absolute;left:455px;top:184px;width:1px;height:2px;background:#000"></div>
<div style="position:absolute;left:480px;top:184px;width:1px;height:2px;background:#000"></div>
<div style="position:absolute;left:504px;top:182px;width:1px;height:4px;background:#000"></div>
<div style="position:absolute;left:529px;top:184px;width:1px;height:2px;background:#000"></div>
<div style="position:absolute;left:554px;top:184px;width:1px;height:2px;background:#000"></div>
<div style="position:absolute;left:578px;top:182px;width:1px;height:4px;background:#000"></div>
<div style="position:absolute;left:603px;top:184px;width:1px;height:2px;background:#000"></div>
<div style="position:absolute;left:627px;top:184px;width:1px;height:2px;background:#000"></div>
<div style="position:absolute;left:652px;top:182px;width:1px;height:4px;background:#000"></div>
<div style="position:absolute;left:676px;top:184px;width:1px;height:2px;background:#000"></div>
<div style="position:absolute;left:701px;top:184px;width:1px;height:2px;background:#000"></div>
<div style="position:absolute;left:725px;top:182px;width:1px;height:4px;background:#000"></div>
<div style="position:absolute;left:750px;top:184px;width:1px;height:2px;background:#000"></div>
<div style="position:absolute;left:22.6px;top:168.5px;width:80px;text-align:center;font-size:12px;line-height:12px;-webkit-text-stroke:0.35px #000;color:#000">-30</div>
<div style="position:absolute;left:96.3px;top:168.5px;width:80px;text-align:center;font-size:12px;line-height:12px;-webkit-text-stroke:0.35px #000;color:#000">0</div>
<div style="position:absolute;left:170.0px;top:168.5px;width:80px;text-align:center;font-size:12px;line-height:12px;-webkit-text-stroke:0.35px #000;color:#000">30</div>
<div style="position:absolute;left:243.6px;top:168.5px;width:80px;text-align:center;font-size:12px;line-height:12px;-webkit-text-stroke:0.35px #000;color:#000">1:00</div>
<div style="position:absolute;left:317.3px;top:168.5px;width:80px;text-align:center;font-size:12px;line-height:12px;-webkit-text-stroke:0.35px #000;color:#000">1:30</div>
<div style="position:absolute;left:390.9px;top:168.5px;width:80px;text-align:center;font-size:12px;line-height:12px;-webkit-text-stroke:0.35px #000;color:#000">2:00</div>
<div style="position:absolute;left:464.6px;top:168.5px;width:80px;text-align:center;font-size:12px;line-height:12px;-webkit-text-stroke:0.35px #000;color:#000">2:30</div>
<div style="position:absolute;left:538.3px;top:168.5px;width:80px;text-align:center;font-size:12px;line-height:12px;-webkit-text-stroke:0.35px #000;color:#000">3:00</div>
<div style="position:absolute;left:611.9px;top:168.5px;width:80px;text-align:center;font-size:12px;line-height:12px;-webkit-text-stroke:0.35px #000;color:#000">3:30</div>
<div style="position:absolute;left:685.6px;top:168.5px;width:80px;text-align:center;font-size:12px;line-height:12px;-webkit-text-stroke:0.35px #000;color:#000">4:00</div>
<div style="position:absolute;left:3px;top:189px;width:747px;height:323px;background:#a0a0a0"></div>
<div style="position:absolute;left:4px;top:190px;width:745px;height:302px;border:1px solid #c8c890;"></div>
<div style="position:absolute;left:5px;top:191px;width:743px;height:300px;border:2px solid #ffff80;"></div>
<div style="position:absolute;left:7px;top:193px;width:739px;height:296px;border:1px solid #000;border-bottom:2px solid #000;border-right:2px solid #000"></div>
<div style="position:absolute;left:8px;top:194px;width:95px;height:293px;background:#c9c9d7"></div>
<div style="position:absolute;left:103px;top:194px;width:1px;height:293px;background:#000"></div>
<div style="position:absolute;left:8px;top:194px;width:15px;height:14px;background:#c9c9d7;border-top:1px solid #fff;border-left:1px solid #fff;border-right:1px solid #707070;border-bottom:1px solid #707070"></div>
<svg style="position:absolute;left:10px;top:196px;" width="11" height="10" viewBox="0 0 11 10"><path d="M2 2 L10 9.5 M10 2 L2 9.5" stroke="#000" stroke-width="1.3"/></svg>
<div style="position:absolute;left:24px;top:194px;width:79px;height:14px;background:#c9c9d7;border-top:1px solid #fff;border-left:1px solid #fff;border-right:1px solid #707070;border-bottom:1px solid #707070"></div>
<div style="position:absolute;left:26.5px;top:197.00px;font-size:10.5px;line-height:10.5px;height:10.5px;color:#000;white-space:nowrap;"><span style="position:relative;top:0">Bằng Cườn</span></div>
<svg style="position:absolute;left:88px;top:198px;" width="12" height="7" viewBox="0 0 12 7"><path d="M0 0 H12 L6 7 Z" fill="#000"/></svg>
<div style="position:absolute;left:11.5px;top:212.32px;font-size:10.7px;line-height:10.7px;height:10.7px;color:#000;white-space:nowrap;"><span style="position:relative;top:0">Stereo, 44100Hz</span></div>
<div style="position:absolute;left:11.5px;top:228.62px;font-size:10.7px;line-height:10.7px;height:10.7px;color:#000;white-space:nowrap;"><span style="position:relative;top:0">32-bit float</span></div>
<div style="position:absolute;left:8px;top:243px;width:95px;height:1px;background:#8a8a8a"></div>
<div style="position:absolute;left:8px;top:244px;width:47px;height:14px;border-top:1px solid #fff;border-left:1px solid #fff;border-right:1px solid #707070;border-bottom:1px solid #707070"></div>
<div style="position:absolute;left:56px;top:244px;width:47px;height:14px;border-top:1px solid #fff;border-left:1px solid #fff;border-right:1px solid #707070;border-bottom:1px solid #707070"></div>
<div style="position:absolute;left:19px;top:245.62px;font-size:10.7px;line-height:10.7px;height:10.7px;color:#000;white-space:nowrap;"><span style="position:relative;top:0">Mute</span></div>
<div style="position:absolute;left:68px;top:245.62px;font-size:10.7px;line-height:10.7px;height:10.7px;color:#000;white-space:nowrap;"><span style="position:relative;top:0">Solo</span></div>
<div style="position:absolute;left:8px;top:258px;width:95px;height:1px;background:#707070"></div>
<div style="position:absolute;left:19px;top:269px;width:5px;height:1px;background:#000"></div>
<svg style="position:absolute;left:87.5px;top:266px;" width="6" height="6" viewBox="0 0 6 6"><path d="M3 0 V6 M0 3 H6" stroke="#000" stroke-width="1.1"/></svg>
<div style="position:absolute;left:19px;top:280px;width:75px;height:1px;background:#909090"></div><div style="position:absolute;left:19px;top:275px;width:1px;height:5px;background:#f4f4f8"></div><div style="position:absolute;left:26px;top:277px;width:1px;height:3px;background:#f4f4f8"></div><div style="position:absolute;left:34px;top:277px;width:1px;height:3px;background:#f4f4f8"></div><div style="position:absolute;left:41px;top:277px;width:1px;height:3px;background:#f4f4f8"></div><div style="position:absolute;left:48px;top:277px;width:1px;height:3px;background:#f4f4f8"></div><div style="position:absolute;left:56px;top:277px;width:1px;height:3px;background:#f4f4f8"></div><div style="position:absolute;left:63px;top:277px;width:1px;height:3px;background:#f4f4f8"></div><div style="position:absolute;left:70px;top:277px;width:1px;height:3px;background:#f4f4f8"></div><div style="position:absolute;left:77px;top:277px;width:1px;height:3px;background:#f4f4f8"></div><div style="position:absolute;left:85px;top:277px;width:1px;height:3px;background:#f4f4f8"></div><div style="position:absolute;left:92px;top:275px;width:1px;height:5px;background:#f4f4f8"></div><svg style="position:absolute;left:50.5px;top:273px;" width="12" height="14" viewBox="0 0 12 14"><path d="M1 3.5 Q1 1 3.5 1 H8.5 Q11 1 11 3.5 V8 L6 13 L1 8 Z" fill="#c4c4dc" stroke="#000" stroke-width="1"/><path d="M4 5.5 H8 M4 7.5 H8 M4 9.5 H8" stroke="#f0f0ff" stroke-width="0.8"/></svg>
<div style="position:absolute;left:18.5px;top:293.86px;font-size:9px;line-height:9px;height:9px;color:#000;white-space:nowrap;"><span style="position:relative;top:0">L</span></div>
<div style="position:absolute;left:86.5px;top:293.40px;font-size:9.5px;line-height:9.5px;height:9.5px;color:#000;white-space:nowrap;"><span style="position:relative;top:0">R</span></div>
<div style="position:absolute;left:19px;top:309px;width:75px;height:1px;background:#909090"></div><div style="position:absolute;left:19px;top:304px;width:1px;height:5px;background:#f4f4f8"></div><div style="position:absolute;left:26px;top:306px;width:1px;height:3px;background:#f4f4f8"></div><div style="position:absolute;left:34px;top:306px;width:1px;height:3px;background:#f4f4f8"></div><div style="position:absolute;left:41px;top:306px;width:1px;height:3px;background:#f4f4f8"></div><div style="position:absolute;left:48px;top:306px;width:1px;height:3px;background:#f4f4f8"></div><div style="position:absolute;left:56px;top:306px;width:1px;height:3px;background:#f4f4f8"></div><div style="position:absolute;left:63px;top:306px;width:1px;height:3px;background:#f4f4f8"></div><div style="position:absolute;left:70px;top:306px;width:1px;height:3px;background:#f4f4f8"></div><div style="position:absolute;left:77px;top:306px;width:1px;height:3px;background:#f4f4f8"></div><div style="position:absolute;left:85px;top:306px;width:1px;height:3px;background:#f4f4f8"></div><div style="position:absolute;left:92px;top:304px;width:1px;height:5px;background:#f4f4f8"></div><svg style="position:absolute;left:50.5px;top:302px;" width="12" height="14" viewBox="0 0 12 14"><path d="M1 3.5 Q1 1 3.5 1 H8.5 Q11 1 11 3.5 V8 L6 13 L1 8 Z" fill="#c4c4dc" stroke="#000" stroke-width="1"/><path d="M4 5.5 H8 M4 7.5 H8 M4 9.5 H8" stroke="#f0f0ff" stroke-width="0.8"/></svg>
<div style="position:absolute;left:26px;top:469px;width:62px;height:18px;border-top:1px solid #fff;border-left:1px solid #fff;border-right:1px solid #9a9a9a"></div>
<svg style="position:absolute;left:51px;top:475px;" width="13" height="8" viewBox="0 0 13 8"><path d="M1 7 L6.5 1 L12 7 Z" fill="#a8a8a8" stroke="#000" stroke-width="1"/></svg>
<div style="position:absolute;left:104px;top:194px;width:30px;height:293px;background:#c9c9d7;border-left:1px solid #fff"></div>
<div style="position:absolute;left:104px;top:336px;width:30px;height:1px;background:#909090"></div>
<div style="position:absolute;left:104px;top:344px;width:30px;height:1px;background:#fff"></div>
<div style="position:absolute;left:69px;top:196.7px;width:60px;text-align:right;font-size:11.5px;line-height:11.5px;font-weight:bold;color:#000">1.0</div>
<div style="position:absolute;left:73px;top:225.4px;width:60px;text-align:right;font-size:11.5px;line-height:11.5px;color:#000">0.5-</div>
<div style="position:absolute;left:73px;top:260.9px;width:60px;text-align:right;font-size:11.5px;line-height:11.5px;font-weight:bold;color:#000">0.0-</div>
<div style="position:absolute;left:73px;top:296.4px;width:60px;text-align:right;font-size:11.5px;line-height:11.5px;color:#000">-0.5-</div>
<div style="position:absolute;left:69px;top:323.4px;width:60px;text-align:right;font-size:11.5px;line-height:11.5px;font-weight:bold;color:#000">-1.0</div>
<div style="position:absolute;left:69px;top:346.3px;width:60px;text-align:right;font-size:11.5px;line-height:11.5px;font-weight:bold;color:#000">1.0</div>
<div style="position:absolute;left:73px;top:375.4px;width:60px;text-align:right;font-size:11.5px;line-height:11.5px;color:#000">0.5-</div>
<div style="position:absolute;left:73px;top:410.9px;width:60px;text-align:right;font-size:11.5px;line-height:11.5px;font-weight:bold;color:#000">0.0-</div>
<div style="position:absolute;left:73px;top:446.4px;width:60px;text-align:right;font-size:11.5px;line-height:11.5px;color:#000">-0.5-</div>
<div style="position:absolute;left:69px;top:473.4px;width:60px;text-align:right;font-size:11.5px;line-height:11.5px;font-weight:bold;color:#000">-1.0</div>
<div style="position:absolute;left:134px;top:194px;width:601px;height:142px;background:#c0c0c0"></div>
<div style="position:absolute;left:134px;top:344px;width:601px;height:143px;background:#c0c0c0"></div>
<div style="position:absolute;left:734px;top:194px;width:1px;height:293px;background:#a0a0a0"></div>
<div style="position:absolute;left:735px;top:194px;width:9px;height:293px;background:#d6d6d6"></div>
<div style="position:absolute;left:134px;top:337px;width:610px;height:7px;background:#a0a0a0;border-top:1px solid #000;border-bottom:1px solid #000"></div>
<svg style="position:absolute;left:0;top:0" width="769" height="611" viewBox="0 0 769 611" shape-rendering="crispEdges"><polygon points="143,199 144,199 144,215 145,215 145,211 146,211 146,213 147,213 147,213 148,213 148,212 149,212 149,212 150,212 150,211 151,211 151,212 152,212 152,215 153,215 153,214 154,214 154,215 155,215 155,212 156,212 156,216 157,216 157,215 158,215 158,211 159,211 159,221 160,221 160,214 161,214 161,211 162,211 162,221 163,221 163,209 164,209 164,212 165,212 165,214 166,214 166,215 167,215 167,214 168,214 168,212 169,212 169,215 170,215 170,213 171,213 171,212 172,212 172,214 173,214 173,213 174,213 174,201 175,201 175,218 176,218 176,212 177,212 177,204 178,204 178,215 179,215 179,205 180,205 180,203 181,203 181,206 182,206 182,201 183,201 183,205 184,205 184,205 185,205 185,204 186,204 186,205 187,205 187,203 188,203 188,195 189,195 189,205 190,205 190,204 191,204 191,216 192,216 192,215 193,215 193,215 194,215 194,217 195,217 195,219 196,219 196,205 197,205 197,208 198,208 198,208 199,208 199,201 200,201 200,205 201,205 201,217 202,217 202,205 203,205 203,199 204,199 204,206 205,206 205,196 206,196 206,208 207,208 207,205 208,205 208,207 209,207 209,207 210,207 210,207 211,207 211,207 212,207 212,219 213,219 213,203 214,203 214,206 215,206 215,208 216,208 216,207 217,207 217,207 218,207 218,207 219,207 219,205 220,205 220,205 221,205 221,201 222,201 222,205 223,205 223,207 224,207 224,205 225,205 225,224 226,224 226,225 227,225 227,195 228,195 228,201 229,201 229,196 230,196 230,196 231,196 231,195 232,195 232,196 233,196 233,196 234,196 234,204 235,204 235,195 236,195 236,203 237,203 237,196 238,196 238,197 239,197 239,199 240,199 240,196 241,196 241,197 242,197 242,195 243,195 243,197 244,197 244,208 245,208 245,204 246,204 246,201 247,201 247,200 248,200 248,198 249,198 249,196 250,196 250,195 251,195 251,200 252,200 252,206 253,206 253,196 254,196 254,201 255,201 255,196 256,196 256,196 257,196 257,198 258,198 258,197 259,197 259,195 260,195 260,195 261,195 261,199 262,199 262,195 263,195 263,198 264,198 264,198 265,198 265,195 266,195 266,196 267,196 267,195 268,195 268,198 269,198 269,196 270,196 270,202 271,202 271,196 272,196 272,196 273,196 273,195 274,195 274,198 275,198 275,207 276,207 276,198 277,198 277,195 278,195 278,197 279,197 279,196 280,196 280,196 281,196 281,209 282,209 282,199 283,199 283,196 284,196 284,196 285,196 285,196 286,196 286,196 287,196 287,196 288,196 288,196 289,196 289,196 290,196 290,195 291,195 291,198 292,198 292,199 293,199 293,199 294,199 294,208 295,208 295,197 296,197 296,199 297,199 297,198 298,198 298,196 299,196 299,197 300,197 300,196 301,196 301,195 302,195 302,195 303,195 303,196 304,196 304,197 305,197 305,195 306,195 306,196 307,196 307,196 308,196 308,195 309,195 309,200 310,200 310,196 311,196 311,209 312,209 312,196 313,196 313,200 314,200 314,200 315,200 315,200 316,200 316,200 317,200 317,197 318,197 318,204 319,204 319,196 320,196 320,203 321,203 321,195 322,195 322,207 323,207 323,196 324,196 324,196 325,196 325,195 326,195 326,196 327,196 327,196 328,196 328,202 329,202 329,196 330,196 330,200 331,200 331,196 332,196 332,196 333,196 333,196 334,196 334,203 335,203 335,198 336,198 336,196 337,196 337,198 338,198 338,195 339,195 339,215 340,215 340,199 341,199 341,195 342,195 342,199 343,199 343,196 344,196 344,195 345,195 345,215 346,215 346,198 347,198 347,199 348,199 348,196 349,196 349,196 350,196 350,196 351,196 351,195 352,195 352,196 353,196 353,196 354,196 354,197 355,197 355,203 356,203 356,196 357,196 357,198 358,198 358,199 359,199 359,196 360,196 360,196 361,196 361,196 362,196 362,196 363,196 363,196 364,196 364,196 365,196 365,196 366,196 366,205 367,205 367,200 368,200 368,196 369,196 369,195 370,195 370,204 371,204 371,195 372,195 372,196 373,196 373,195 374,195 374,196 375,196 375,205 376,205 376,200 377,200 377,198 378,198 378,198 379,198 379,196 380,196 380,205 381,205 381,196 382,196 382,196 383,196 383,199 384,199 384,196 385,196 385,204 386,204 386,197 387,197 387,196 388,196 388,196 389,196 389,195 390,195 390,200 391,200 391,195 392,195 392,203 393,203 393,196 394,196 394,196 395,196 395,196 396,196 396,195 397,195 397,196 398,196 398,196 399,196 399,196 400,196 400,204 401,204 401,199 402,199 402,195 403,195 403,198 404,198 404,200 405,200 405,196 406,196 406,196 407,196 407,195 408,195 408,196 409,196 409,197 410,197 410,196 411,196 411,213 412,213 412,200 413,200 413,199 414,199 414,199 415,199 415,196 416,196 416,196 417,196 417,195 418,195 418,195 419,195 419,197 420,197 420,200 421,200 421,195 422,195 422,198 423,198 423,201 424,201 424,211 425,211 425,196 426,196 426,205 427,205 427,196 428,196 428,195 429,195 429,212 430,212 430,196 431,196 431,196 432,196 432,195 433,195 433,196 434,196 434,196 435,196 435,202 436,202 436,196 437,196 437,204 438,204 438,203 439,203 439,206 440,206 440,202 441,202 441,201 442,201 442,200 443,200 443,202 444,202 444,200 445,200 445,199 446,199 446,201 447,201 447,210 448,210 448,204 449,204 449,202 450,202 450,200 451,200 451,200 452,200 452,195 453,195 453,210 454,210 454,200 455,200 455,199 456,199 456,205 457,205 457,199 458,199 458,202 459,202 459,204 460,204 460,203 461,203 461,201 462,201 462,205 463,205 463,203 464,203 464,195 465,195 465,202 466,202 466,199 467,199 467,201 468,201 468,200 469,200 469,197 470,197 470,204 471,204 471,197 472,197 472,195 473,195 473,196 474,196 474,197 475,197 475,196 476,196 476,196 477,196 477,200 478,200 478,196 479,196 479,198 480,198 480,198 481,198 481,199 482,199 482,196 483,196 483,198 484,198 484,196 485,196 485,196 486,196 486,201 487,201 487,196 488,196 488,196 489,196 489,196 490,196 490,201 491,201 491,196 492,196 492,196 493,196 493,195 494,195 494,196 495,196 495,196 496,196 496,199 497,199 497,196 498,196 498,198 499,198 499,196 500,196 500,195 501,195 501,198 502,198 502,203 503,203 503,196 504,196 504,196 505,196 505,197 506,197 506,195 507,195 507,210 508,210 508,196 509,196 509,202 510,202 510,196 511,196 511,196 512,196 512,196 513,196 513,195 514,195 514,196 515,196 515,198 516,198 516,196 517,196 517,195 518,195 518,196 519,196 519,199 520,199 520,200 521,200 521,196 522,196 522,197 523,197 523,196 524,196 524,196 525,196 525,195 526,195 526,196 527,196 527,197 528,197 528,206 529,206 529,205 530,205 530,214 531,214 531,199 532,199 532,195 533,195 533,196 534,196 534,195 535,195 535,196 536,196 536,196 537,196 537,196 538,196 538,196 539,196 539,198 540,198 540,210 541,210 541,196 542,196 542,200 543,200 543,196 544,196 544,198 545,198 545,196 546,196 546,195 547,195 547,196 548,196 548,195 549,195 549,204 550,204 550,198 551,198 551,197 552,197 552,200 553,200 553,199 554,199 554,202 555,202 555,196 556,196 556,196 557,196 557,200 558,200 558,199 559,199 559,196 560,196 560,196 561,196 561,201 562,201 562,197 563,197 563,198 564,198 564,197 565,197 565,196 566,196 566,196 567,196 567,197 568,197 568,204 569,204 569,196 570,196 570,203 571,203 571,196 572,196 572,204 573,204 573,201 574,201 574,195 575,195 575,197 576,197 576,196 577,196 577,196 578,196 578,204 579,204 579,199 580,199 580,208 581,208 581,197 582,197 582,200 583,200 583,199 584,199 584,197 585,197 585,195 586,195 586,201 587,201 587,197 588,197 588,196 589,196 589,197 590,197 590,198 591,198 591,200 592,200 592,196 593,196 593,197 594,197 594,196 595,196 595,207 596,207 596,196 597,196 597,197 598,197 598,198 599,198 599,198 600,198 600,197 601,197 601,205 602,205 602,197 603,197 603,195 604,195 604,198 605,198 605,195 606,195 606,196 607,196 607,195 608,195 608,212 609,212 609,201 610,201 610,203 611,203 611,196 612,196 612,197 613,197 613,200 614,200 614,195 615,195 615,197 616,197 616,220 617,220 617,201 618,201 618,210 619,210 619,195 620,195 620,201 621,201 621,198 622,198 622,205 623,205 623,226 624,226 624,196 625,196 625,204 626,204 626,196 627,196 627,213 628,213 628,201 629,201 629,199 630,199 630,225 631,225 631,197 632,197 632,211 633,211 633,204 634,204 634,201 635,201 635,197 636,197 636,195 637,195 637,197 638,197 638,199 639,199 639,205 640,205 640,196 641,196 641,224 642,224 642,197 643,197 643,198 644,198 644,196 645,196 645,196 646,196 646,201 647,201 647,196 648,196 648,196 649,196 649,196 650,196 650,212 651,212 651,196 652,196 652,196 653,196 653,196 654,196 654,196 655,196 655,200 656,200 656,202 657,202 657,202 658,202 658,199 659,199 659,200 660,200 660,195 661,195 661,196 662,196 662,196 663,196 663,196 664,196 664,198 665,198 665,196 666,196 666,200 667,200 667,197 668,197 668,200 669,200 669,211 670,211 670,195 671,195 671,197 672,197 672,199 673,199 673,195 674,195 674,195 675,195 675,195 676,195 676,211 677,211 677,196 678,196 678,196 679,196 679,196 680,196 680,199 681,199 681,196 682,196 682,202 683,202 683,200 684,200 684,195 685,195 685,204 686,204 686,198 687,198 687,204 688,204 688,204 689,204 689,201 690,201 690,199 691,199 691,195 692,195 692,201 693,201 693,201 694,201 694,195 695,195 695,195 696,195 696,205 697,205 697,205 698,205 698,203 699,203 699,205 700,205 700,201 701,201 701,197 702,197 702,204 703,204 703,200 704,200 704,201 705,201 705,204 706,204 706,202 707,202 707,200 708,200 708,204 709,204 709,202 710,202 710,195 711,195 711,205 712,205 712,203 713,203 713,196 714,196 714,200 715,200 715,199 716,199 716,198 717,198 717,200 718,200 718,201 719,201 719,200 720,200 720,202 721,202 721,196 722,196 722,241 723,241 723,247 724,247 724,252 725,252 725,255 726,255 726,258 727,258 727,259 728,259 728,261 729,261 729,262 730,262 730,263 731,263 731,263 732,263 732,264 733,264 733,264 734,264 734,264 735,264 735,266 734,266 734,266 733,266 733,266 732,266 732,267 731,267 731,267 730,267 730,268 729,268 729,269 728,269 728,271 727,271 727,272 726,272 726,275 725,275 725,278 724,278 724,283 723,283 723,289 722,289 722,321 721,321 721,335 720,335 720,323 719,323 719,331 718,331 718,330 717,330 717,327 716,327 716,325 715,325 715,332 714,332 714,320 713,320 713,325 712,325 712,325 711,325 711,334 710,334 710,331 709,331 709,325 708,325 708,322 707,322 707,325 706,325 706,330 705,330 705,332 704,332 704,330 703,330 703,322 702,322 702,322 701,322 701,335 700,335 700,334 699,334 699,330 698,330 698,323 697,323 697,318 696,318 696,329 695,329 695,329 694,329 694,328 693,328 693,331 692,331 692,325 691,325 691,327 690,327 690,325 689,325 689,327 688,327 688,325 687,325 687,330 686,330 686,327 685,327 685,329 684,329 684,334 683,334 683,329 682,329 682,330 681,330 681,331 680,331 680,330 679,330 679,328 678,328 678,331 677,331 677,334 676,334 676,332 675,332 675,334 674,334 674,325 673,325 673,332 672,332 672,334 671,334 671,331 670,331 670,317 669,317 669,333 668,333 668,312 667,312 667,334 666,334 666,328 665,328 665,331 664,331 664,333 663,333 663,326 662,326 662,327 661,327 661,329 660,329 660,334 659,334 659,333 658,333 658,324 657,324 657,331 656,331 656,328 655,328 655,334 654,334 654,329 653,329 653,335 652,335 652,335 651,335 651,334 650,334 650,334 649,334 649,329 648,329 648,333 647,333 647,330 646,330 646,317 645,317 645,334 644,334 644,331 643,331 643,332 642,332 642,329 641,329 641,319 640,319 640,320 639,320 639,333 638,333 638,333 637,333 637,316 636,316 636,317 635,317 635,330 634,330 634,332 633,332 633,335 632,335 632,305 631,305 631,310 630,310 630,332 629,332 629,333 628,333 628,307 627,307 627,321 626,321 626,327 625,327 625,327 624,327 624,321 623,321 623,310 622,310 622,335 621,335 621,309 620,309 620,327 619,327 619,328 618,328 618,325 617,325 617,332 616,332 616,321 615,321 615,332 614,332 614,333 613,333 613,330 612,330 612,332 611,332 611,329 610,329 610,318 609,318 609,335 608,335 608,332 607,332 607,328 606,328 606,334 605,334 605,334 604,334 604,333 603,333 603,335 602,335 602,332 601,332 601,320 600,320 600,329 599,329 599,335 598,335 598,333 597,333 597,330 596,330 596,334 595,334 595,331 594,331 594,328 593,328 593,320 592,320 592,324 591,324 591,334 590,334 590,329 589,329 589,329 588,329 588,335 587,335 587,334 586,334 586,317 585,317 585,324 584,324 584,329 583,329 583,324 582,324 582,315 581,315 581,329 580,329 580,335 579,335 579,335 578,335 578,330 577,330 577,330 576,330 576,333 575,333 575,326 574,326 574,335 573,335 573,312 572,312 572,335 571,335 571,335 570,335 570,334 569,334 569,333 568,333 568,334 567,334 567,335 566,335 566,334 565,334 565,323 564,323 564,334 563,334 563,324 562,324 562,334 561,334 561,334 560,334 560,314 559,314 559,332 558,332 558,325 557,325 557,333 556,333 556,334 555,334 555,333 554,333 554,327 553,327 553,331 552,331 552,326 551,326 551,333 550,333 550,328 549,328 549,334 548,334 548,322 547,322 547,329 546,329 546,330 545,330 545,331 544,331 544,333 543,333 543,325 542,325 542,323 541,323 541,330 540,330 540,313 539,313 539,329 538,329 538,329 537,329 537,335 536,335 536,329 535,329 535,333 534,333 534,335 533,335 533,329 532,329 532,333 531,333 531,333 530,333 530,328 529,328 529,315 528,315 528,331 527,331 527,315 526,315 526,335 525,335 525,331 524,331 524,329 523,329 523,329 522,329 522,334 521,334 521,333 520,333 520,335 519,335 519,334 518,334 518,320 517,320 517,334 516,334 516,334 515,334 515,333 514,333 514,324 513,324 513,334 512,334 512,333 511,333 511,334 510,334 510,329 509,329 509,335 508,335 508,332 507,332 507,329 506,329 506,317 505,317 505,334 504,334 504,334 503,334 503,334 502,334 502,331 501,331 501,333 500,333 500,334 499,334 499,329 498,329 498,333 497,333 497,325 496,325 496,329 495,329 495,331 494,331 494,327 493,327 493,322 492,322 492,334 491,334 491,329 490,329 490,335 489,335 489,334 488,334 488,316 487,316 487,334 486,334 486,324 485,324 485,331 484,331 484,318 483,318 483,330 482,330 482,321 481,321 481,331 480,331 480,335 479,335 479,332 478,332 478,325 477,325 477,335 476,335 476,325 475,325 475,326 474,326 474,333 473,333 473,327 472,327 472,323 471,323 471,326 470,326 470,328 469,328 469,326 468,326 468,330 467,330 467,329 466,329 466,326 465,326 465,330 464,330 464,328 463,328 463,326 462,326 462,325 461,325 461,329 460,329 460,330 459,330 459,319 458,319 458,331 457,331 457,329 456,329 456,326 455,326 455,326 454,326 454,329 453,329 453,328 452,328 452,324 451,324 451,330 450,330 450,331 449,331 449,335 448,335 448,326 447,326 447,329 446,329 446,329 445,329 445,335 444,335 444,326 443,326 443,326 442,326 442,320 441,320 441,327 440,327 440,326 439,326 439,330 438,330 438,325 437,325 437,334 436,334 436,333 435,333 435,330 434,330 434,334 433,334 433,326 432,326 432,334 431,334 431,334 430,334 430,330 429,330 429,334 428,334 428,324 427,324 427,327 426,327 426,335 425,335 425,332 424,332 424,334 423,334 423,333 422,333 422,329 421,329 421,332 420,332 420,331 419,331 419,335 418,335 418,335 417,335 417,331 416,331 416,334 415,334 415,335 414,335 414,335 413,335 413,333 412,333 412,324 411,324 411,334 410,334 410,335 409,335 409,335 408,335 408,332 407,332 407,325 406,325 406,332 405,332 405,329 404,329 404,334 403,334 403,333 402,333 402,333 401,333 401,335 400,335 400,332 399,332 399,329 398,329 398,335 397,335 397,333 396,333 396,333 395,333 395,332 394,332 394,328 393,328 393,319 392,319 392,317 391,317 391,333 390,333 390,329 389,329 389,332 388,332 388,334 387,334 387,334 386,334 386,323 385,323 385,329 384,329 384,323 383,323 383,333 382,333 382,326 381,326 381,322 380,322 380,334 379,334 379,334 378,334 378,324 377,324 377,333 376,333 376,330 375,330 375,329 374,329 374,327 373,327 373,334 372,334 372,335 371,335 371,330 370,330 370,334 369,334 369,334 368,334 368,332 367,332 367,330 366,330 366,333 365,333 365,313 364,313 364,329 363,329 363,326 362,326 362,329 361,329 361,333 360,333 360,335 359,335 359,333 358,333 358,330 357,330 357,331 356,331 356,328 355,328 355,328 354,328 354,329 353,329 353,332 352,332 352,326 351,326 351,334 350,334 350,334 349,334 349,333 348,333 348,333 347,333 347,333 346,333 346,329 345,329 345,333 344,333 344,329 343,329 343,329 342,329 342,334 341,334 341,316 340,316 340,334 339,334 339,335 338,335 338,327 337,327 337,334 336,334 336,332 335,332 335,330 334,330 334,327 333,327 333,321 332,321 332,325 331,325 331,330 330,330 330,329 329,329 329,329 328,329 328,315 327,315 327,333 326,333 326,329 325,329 325,333 324,333 324,329 323,329 323,329 322,329 322,332 321,332 321,334 320,334 320,329 319,329 319,333 318,333 318,331 317,331 317,317 316,317 316,333 315,333 315,334 314,334 314,333 313,333 313,334 312,334 312,318 311,318 311,323 310,323 310,333 309,333 309,333 308,333 308,330 307,330 307,329 306,329 306,333 305,333 305,326 304,326 304,331 303,331 303,332 302,332 302,332 301,332 301,333 300,333 300,327 299,327 299,330 298,330 298,329 297,329 297,329 296,329 296,323 295,323 295,329 294,329 294,334 293,334 293,332 292,332 292,334 291,334 291,331 290,331 290,334 289,334 289,325 288,325 288,334 287,334 287,335 286,335 286,330 285,330 285,330 284,330 284,335 283,335 283,326 282,326 282,334 281,334 281,329 280,329 280,333 279,333 279,331 278,331 278,331 277,331 277,335 276,335 276,335 275,335 275,324 274,324 274,334 273,334 273,333 272,333 272,329 271,329 271,333 270,333 270,334 269,334 269,331 268,331 268,335 267,335 267,325 266,325 266,331 265,331 265,335 264,335 264,331 263,331 263,329 262,329 262,334 261,334 261,333 260,333 260,335 259,335 259,328 258,328 258,317 257,317 257,330 256,330 256,329 255,329 255,329 254,329 254,323 253,323 253,324 252,324 252,333 251,333 251,334 250,334 250,332 249,332 249,330 248,330 248,330 247,330 247,334 246,334 246,329 245,329 245,333 244,333 244,334 243,334 243,334 242,334 242,333 241,333 241,334 240,334 240,335 239,335 239,335 238,335 238,335 237,335 237,333 236,333 236,335 235,335 235,323 234,323 234,332 233,332 233,334 232,334 232,330 231,330 231,323 230,323 230,329 229,329 229,325 228,325 228,329 227,329 227,306 226,306 226,304 225,304 225,321 224,321 224,319 223,319 223,329 222,329 222,323 221,323 221,323 220,323 220,321 219,321 219,323 218,323 218,323 217,323 217,319 216,319 216,322 215,322 215,319 214,319 214,321 213,321 213,321 212,321 212,321 211,321 211,306 210,306 210,323 209,323 209,331 208,331 208,321 207,321 207,327 206,327 206,319 205,319 205,321 204,321 204,320 203,320 203,323 202,323 202,320 201,320 201,323 200,323 200,323 199,323 199,320 198,320 198,309 197,309 197,322 196,322 196,322 195,322 195,321 194,321 194,313 193,313 193,313 192,313 192,308 191,308 191,322 190,322 190,319 189,319 189,323 188,323 188,320 187,320 187,316 186,316 186,323 185,323 185,323 184,323 184,320 183,320 183,320 182,320 182,319 181,319 181,308 180,308 180,321 179,321 179,319 178,319 178,320 177,320 177,332 176,332 176,322 175,322 175,329 174,329 174,321 173,321 173,322 172,322 172,320 171,320 171,319 170,319 170,328 169,328 169,320 168,320 168,320 167,320 167,323 166,323 166,323 165,323 165,308 164,308 164,320 163,320 163,322 162,322 162,322 161,322 161,322 160,322 160,321 159,321 159,321 158,321 158,322 157,322 157,315 156,315 156,310 155,310 155,321 154,321 154,323 153,323 153,321 152,321 152,316 151,316 151,322 150,322 150,323 149,323 149,323 148,323 148,320 147,320 147,321 146,321 146,316 145,316 145,308 144,308 144,332 143,332" fill="#3232c8"/><polygon points="143,249 144,249 144,245 145,245 145,247 146,247 146,248 147,248 147,248 148,248 148,244 149,244 149,251 150,251 150,244 151,244 151,245 152,245 152,248 153,248 153,247 154,247 154,247 155,247 155,248 156,248 156,250 157,250 157,247 158,247 158,247 159,247 159,243 160,243 160,248 161,248 161,248 162,248 162,249 163,249 163,243 164,243 164,248 165,248 165,249 166,249 166,250 167,250 167,243 168,243 168,251 169,251 169,247 170,247 170,250 171,250 171,249 172,249 172,248 173,248 173,249 174,249 174,248 175,248 175,250 176,250 176,249 177,249 177,248 178,248 178,236 179,236 179,244 180,244 180,246 181,246 181,245 182,245 182,244 183,244 183,247 184,247 184,241 185,241 185,244 186,244 186,246 187,246 187,247 188,247 188,247 189,247 189,249 190,249 190,244 191,244 191,258 192,258 192,260 193,260 193,244 194,244 194,246 195,246 195,244 196,244 196,243 197,243 197,244 198,244 198,243 199,243 199,242 200,242 200,245 201,245 201,242 202,242 202,243 203,243 203,241 204,241 204,243 205,243 205,245 206,245 206,245 207,245 207,245 208,245 208,243 209,243 209,245 210,245 210,240 211,240 211,243 212,243 212,240 213,240 213,243 214,243 214,245 215,245 215,246 216,246 216,248 217,248 217,245 218,245 218,248 219,248 219,240 220,240 220,245 221,245 221,244 222,244 222,239 223,239 223,249 224,249 224,241 225,241 225,260 226,260 226,257 227,257 227,242 228,242 228,241 229,241 229,238 230,238 230,245 231,245 231,241 232,241 232,241 233,241 233,240 234,240 234,241 235,241 235,241 236,241 236,243 237,243 237,244 238,244 238,241 239,241 239,242 240,242 240,240 241,240 241,241 242,241 242,240 243,240 243,243 244,243 244,242 245,242 245,242 246,242 246,242 247,242 247,239 248,239 248,241 249,241 249,241 250,241 250,238 251,238 251,242 252,242 252,237 253,237 253,241 254,241 254,239 255,239 255,239 256,239 256,243 257,243 257,241 258,241 258,240 259,240 259,242 260,242 260,240 261,240 261,243 262,243 262,242 263,242 263,241 264,241 264,243 265,243 265,241 266,241 266,236 267,236 267,238 268,238 268,242 269,242 269,245 270,245 270,241 271,241 271,241 272,241 272,241 273,241 273,241 274,241 274,243 275,243 275,236 276,236 276,242 277,242 277,240 278,240 278,242 279,242 279,241 280,241 280,239 281,239 281,243 282,243 282,242 283,242 283,243 284,243 284,241 285,241 285,237 286,237 286,245 287,245 287,236 288,236 288,242 289,242 289,241 290,241 290,240 291,240 291,241 292,241 292,243 293,243 293,241 294,241 294,242 295,242 295,243 296,243 296,242 297,242 297,242 298,242 298,242 299,242 299,238 300,238 300,241 301,241 301,242 302,242 302,238 303,238 303,241 304,241 304,238 305,238 305,243 306,243 306,240 307,240 307,240 308,240 308,243 309,243 309,241 310,241 310,241 311,241 311,240 312,240 312,241 313,241 313,242 314,242 314,244 315,244 315,245 316,245 316,241 317,241 317,243 318,243 318,241 319,241 319,240 320,240 320,240 321,240 321,242 322,242 322,238 323,238 323,243 324,243 324,243 325,243 325,242 326,242 326,241 327,241 327,242 328,242 328,241 329,241 329,242 330,242 330,241 331,241 331,242 332,242 332,241 333,241 333,236 334,236 334,240 335,240 335,237 336,237 336,238 337,238 337,241 338,241 338,239 339,239 339,243 340,243 340,242 341,242 341,240 342,240 342,238 343,238 343,242 344,242 344,242 345,242 345,243 346,243 346,241 347,241 347,244 348,244 348,238 349,238 349,237 350,237 350,242 351,242 351,237 352,237 352,239 353,239 353,242 354,242 354,240 355,240 355,238 356,238 356,236 357,236 357,240 358,240 358,244 359,244 359,241 360,241 360,238 361,238 361,241 362,241 362,240 363,240 363,240 364,240 364,245 365,245 365,236 366,236 366,240 367,240 367,238 368,238 368,238 369,238 369,239 370,239 370,234 371,234 371,238 372,238 372,239 373,239 373,235 374,235 374,238 375,238 375,237 376,237 376,233 377,233 377,238 378,238 378,239 379,239 379,234 380,234 380,237 381,237 381,232 382,232 382,238 383,238 383,238 384,238 384,240 385,240 385,238 386,238 386,238 387,238 387,234 388,234 388,238 389,238 389,235 390,235 390,237 391,237 391,238 392,238 392,239 393,239 393,237 394,237 394,240 395,240 395,240 396,240 396,239 397,239 397,239 398,239 398,238 399,238 399,241 400,241 400,240 401,240 401,239 402,239 402,239 403,239 403,244 404,244 404,244 405,244 405,240 406,240 406,239 407,239 407,239 408,239 408,239 409,239 409,240 410,240 410,240 411,240 411,240 412,240 412,234 413,234 413,240 414,240 414,240 415,240 415,238 416,238 416,238 417,238 417,240 418,240 418,234 419,234 419,238 420,238 420,242 421,242 421,240 422,240 422,240 423,240 423,238 424,238 424,241 425,241 425,240 426,240 426,242 427,242 427,237 428,237 428,238 429,238 429,239 430,239 430,241 431,241 431,239 432,239 432,236 433,236 433,236 434,236 434,241 435,241 435,239 436,239 436,236 437,236 437,240 438,240 438,239 439,239 439,234 440,234 440,240 441,240 441,239 442,239 442,241 443,241 443,238 444,238 444,236 445,236 445,234 446,234 446,239 447,239 447,239 448,239 448,239 449,239 449,240 450,240 450,235 451,235 451,239 452,239 452,233 453,233 453,238 454,238 454,240 455,240 455,241 456,241 456,239 457,239 457,240 458,240 458,234 459,234 459,240 460,240 460,240 461,240 461,240 462,240 462,238 463,238 463,235 464,235 464,239 465,239 465,237 466,237 466,238 467,238 467,235 468,235 468,242 469,242 469,238 470,238 470,236 471,236 471,235 472,235 472,237 473,237 473,237 474,237 474,236 475,236 475,243 476,243 476,239 477,239 477,240 478,240 478,234 479,234 479,234 480,234 480,240 481,240 481,239 482,239 482,239 483,239 483,239 484,239 484,238 485,238 485,241 486,241 486,235 487,235 487,240 488,240 488,242 489,242 489,240 490,240 490,235 491,235 491,243 492,243 492,239 493,239 493,239 494,239 494,240 495,240 495,239 496,239 496,238 497,238 497,239 498,239 498,238 499,238 499,244 500,244 500,238 501,238 501,240 502,240 502,240 503,240 503,239 504,239 504,241 505,241 505,239 506,239 506,240 507,240 507,239 508,239 508,240 509,240 509,238 510,238 510,235 511,235 511,232 512,232 512,239 513,239 513,240 514,240 514,240 515,240 515,235 516,235 516,236 517,236 517,238 518,238 518,241 519,241 519,240 520,240 520,239 521,239 521,236 522,236 522,241 523,241 523,239 524,239 524,236 525,236 525,238 526,238 526,240 527,240 527,234 528,234 528,239 529,239 529,239 530,239 530,243 531,243 531,239 532,239 532,239 533,239 533,240 534,240 534,240 535,240 535,241 536,241 536,239 537,239 537,236 538,236 538,240 539,240 539,238 540,238 540,237 541,237 541,236 542,236 542,235 543,235 543,236 544,236 544,236 545,236 545,241 546,241 546,234 547,234 547,237 548,237 548,237 549,237 549,232 550,232 550,237 551,237 551,235 552,235 552,238 553,238 553,236 554,236 554,237 555,237 555,236 556,236 556,236 557,236 557,236 558,236 558,231 559,231 559,236 560,236 560,233 561,233 561,237 562,237 562,238 563,238 563,236 564,236 564,235 565,235 565,236 566,236 566,237 567,237 567,235 568,235 568,233 569,233 569,233 570,233 570,232 571,232 571,237 572,237 572,236 573,236 573,237 574,237 574,233 575,233 575,238 576,238 576,237 577,237 577,239 578,239 578,232 579,232 579,236 580,236 580,235 581,235 581,234 582,234 582,236 583,236 583,234 584,234 584,238 585,238 585,238 586,238 586,238 587,238 587,236 588,236 588,236 589,236 589,235 590,235 590,238 591,238 591,231 592,231 592,236 593,236 593,237 594,237 594,237 595,237 595,238 596,238 596,236 597,236 597,236 598,236 598,235 599,235 599,234 600,234 600,238 601,238 601,232 602,232 602,237 603,237 603,232 604,232 604,233 605,233 605,236 606,236 606,235 607,235 607,239 608,239 608,236 609,236 609,241 610,241 610,237 611,237 611,233 612,233 612,238 613,238 613,234 614,234 614,232 615,232 615,237 616,237 616,237 617,237 617,248 618,248 618,248 619,248 619,248 620,248 620,245 621,245 621,251 622,251 622,248 623,248 623,242 624,242 624,242 625,242 625,246 626,246 626,245 627,245 627,245 628,245 628,246 629,246 629,248 630,248 630,245 631,245 631,246 632,246 632,244 633,244 633,248 634,248 634,246 635,246 635,247 636,247 636,247 637,247 637,246 638,246 638,244 639,244 639,249 640,249 640,243 641,243 641,248 642,248 642,242 643,242 643,238 644,238 644,237 645,237 645,233 646,233 646,242 647,242 647,233 648,233 648,233 649,233 649,236 650,236 650,237 651,237 651,241 652,241 652,236 653,236 653,238 654,238 654,238 655,238 655,236 656,236 656,238 657,238 657,238 658,238 658,237 659,237 659,241 660,241 660,238 661,238 661,237 662,237 662,238 663,238 663,238 664,238 664,232 665,232 665,236 666,236 666,237 667,237 667,236 668,236 668,235 669,235 669,232 670,232 670,239 671,239 671,232 672,232 672,236 673,236 673,233 674,233 674,238 675,238 675,237 676,237 676,237 677,237 677,238 678,238 678,236 679,236 679,238 680,238 680,237 681,237 681,237 682,237 682,237 683,237 683,238 684,238 684,239 685,239 685,236 686,236 686,236 687,236 687,237 688,237 688,238 689,238 689,232 690,232 690,233 691,233 691,236 692,236 692,236 693,236 693,238 694,238 694,236 695,236 695,238 696,238 696,233 697,233 697,242 698,242 698,237 699,237 699,236 700,236 700,238 701,238 701,238 702,238 702,237 703,237 703,234 704,234 704,236 705,236 705,236 706,236 706,238 707,238 707,241 708,241 708,238 709,238 709,236 710,236 710,237 711,237 711,235 712,235 712,230 713,230 713,236 714,236 714,238 715,238 715,234 716,234 716,233 717,233 717,236 718,236 718,235 719,235 719,237 720,237 720,236 721,236 721,235 722,235 722,252 723,252 723,255 724,255 724,258 725,258 725,260 726,260 726,261 727,261 727,262 728,262 728,263 729,263 729,263 730,263 730,264 731,264 731,264 732,264 732,264 733,264 733,264 734,264 734,265 735,265 735,265 734,265 734,266 733,266 733,266 732,266 732,266 731,266 731,266 730,266 730,267 729,267 729,267 728,267 728,268 727,268 727,269 726,269 726,270 725,270 725,272 724,272 724,275 723,275 723,278 722,278 722,291 721,291 721,294 720,294 720,287 719,287 719,290 718,290 718,294 717,294 717,292 716,292 716,294 715,294 715,290 714,290 714,292 713,292 713,292 712,292 712,293 711,293 711,291 710,291 710,291 709,291 709,292 708,292 708,291 707,291 707,291 706,291 706,291 705,291 705,291 704,291 704,295 703,295 703,292 702,292 702,289 701,289 701,289 700,289 700,290 699,290 699,294 698,294 698,291 697,291 697,291 696,291 696,291 695,291 695,292 694,292 694,292 693,292 693,289 692,289 692,289 691,289 691,290 690,290 690,292 689,292 689,290 688,290 688,295 687,295 687,289 686,289 686,291 685,291 685,294 684,294 684,291 683,291 683,290 682,290 682,290 681,290 681,290 680,290 680,292 679,292 679,290 678,290 678,295 677,295 677,292 676,292 676,291 675,291 675,292 674,292 674,297 673,297 673,295 672,295 672,295 671,295 671,294 670,294 670,291 669,291 669,292 668,292 668,295 667,295 667,294 666,294 666,290 665,290 665,290 664,290 664,289 663,289 663,291 662,291 662,289 661,289 661,292 660,292 660,294 659,294 659,291 658,291 658,291 657,291 657,290 656,290 656,298 655,298 655,289 654,289 654,292 653,292 653,291 652,291 652,294 651,294 651,295 650,295 650,290 649,290 649,289 648,289 648,291 647,291 647,290 646,290 646,285 645,285 645,290 644,290 644,294 643,294 643,288 642,288 642,280 641,280 641,282 640,282 640,283 639,283 639,278 638,278 638,277 637,277 637,282 636,282 636,282 635,282 635,286 634,286 634,281 633,281 633,277 632,277 632,284 631,284 631,285 630,285 630,283 629,283 629,282 628,282 628,278 627,278 627,281 626,281 626,287 625,287 625,282 624,282 624,284 623,284 623,279 622,279 622,281 621,281 621,280 620,280 620,277 619,277 619,276 618,276 618,280 617,280 617,284 616,284 616,289 615,289 615,289 614,289 614,288 613,288 613,290 612,290 612,294 611,294 611,293 610,293 610,290 609,290 609,291 608,291 608,292 607,292 607,290 606,290 606,290 605,290 605,285 604,285 604,288 603,288 603,289 602,289 602,293 601,293 601,288 600,288 600,289 599,289 599,294 598,294 598,289 597,289 597,287 596,287 596,286 595,286 595,290 594,290 594,291 593,291 593,290 592,290 592,287 591,287 591,291 590,291 590,294 589,294 589,290 588,290 588,289 587,289 587,291 586,291 586,290 585,290 585,288 584,288 584,288 583,288 583,289 582,289 582,288 581,288 581,287 580,287 580,290 579,290 579,290 578,290 578,288 577,288 577,292 576,292 576,288 575,288 575,289 574,289 574,295 573,295 573,290 572,290 572,290 571,290 571,298 570,298 570,294 569,294 569,290 568,290 568,290 567,290 567,288 566,288 566,289 565,289 565,291 564,291 564,289 563,289 563,288 562,288 562,288 561,288 561,288 560,288 560,293 559,293 559,286 558,286 558,288 557,288 557,294 556,294 556,289 555,289 555,290 554,290 554,289 553,289 553,286 552,286 552,287 551,287 551,288 550,288 550,290 549,290 549,294 548,294 548,289 547,289 547,286 546,286 546,290 545,290 545,290 544,290 544,288 543,288 543,290 542,290 542,289 541,289 541,290 540,290 540,289 539,289 539,289 538,289 538,285 537,285 537,286 536,286 536,285 535,285 535,290 534,290 534,286 533,286 533,287 532,287 532,287 531,287 531,283 530,283 530,285 529,285 529,286 528,286 528,285 527,285 527,287 526,287 526,293 525,293 525,285 524,285 524,288 523,288 523,283 522,283 522,286 521,286 521,287 520,287 520,291 519,291 519,285 518,285 518,285 517,285 517,287 516,287 516,286 515,286 515,285 514,285 514,288 513,288 513,285 512,285 512,282 511,282 511,287 510,287 510,285 509,285 509,285 508,285 508,289 507,289 507,290 506,290 506,287 505,287 505,285 504,285 504,288 503,288 503,286 502,286 502,285 501,285 501,284 500,284 500,286 499,286 499,289 498,289 498,285 497,285 497,285 496,285 496,285 495,285 495,287 494,287 494,287 493,287 493,287 492,287 492,286 491,286 491,286 490,286 490,286 489,286 489,285 488,285 488,287 487,287 487,286 486,286 486,287 485,287 485,282 484,282 484,285 483,285 483,285 482,285 482,287 481,287 481,287 480,287 480,285 479,285 479,286 478,286 478,288 477,288 477,286 476,286 476,288 475,288 475,286 474,286 474,285 473,285 473,285 472,285 472,287 471,287 471,289 470,289 470,290 469,290 469,283 468,283 468,286 467,286 467,285 466,285 466,286 465,286 465,286 464,286 464,290 463,290 463,285 462,285 462,288 461,288 461,287 460,287 460,287 459,287 459,286 458,286 458,287 457,287 457,287 456,287 456,291 455,291 455,288 454,288 454,285 453,285 453,287 452,287 452,286 451,286 451,287 450,287 450,292 449,292 449,287 448,287 448,286 447,286 447,288 446,288 446,289 445,289 445,286 444,286 444,285 443,285 443,291 442,291 442,285 441,285 441,286 440,286 440,283 439,283 439,287 438,287 438,286 437,286 437,287 436,287 436,289 435,289 435,291 434,291 434,288 433,288 433,289 432,289 432,286 431,286 431,290 430,290 430,283 429,283 429,288 428,288 428,286 427,286 427,286 426,286 426,285 425,285 425,285 424,285 424,288 423,288 423,286 422,286 422,287 421,287 421,287 420,287 420,287 419,287 419,288 418,288 418,289 417,289 417,289 416,289 416,287 415,287 415,286 414,286 414,288 413,288 413,283 412,283 412,290 411,290 411,291 410,291 410,287 409,287 409,281 408,281 408,286 407,286 407,289 406,289 406,285 405,285 405,286 404,286 404,282 403,282 403,289 402,289 402,286 401,286 401,285 400,285 400,286 399,286 399,289 398,289 398,288 397,288 397,291 396,291 396,289 395,289 395,288 394,288 394,290 393,290 393,295 392,295 392,288 391,288 391,288 390,288 390,289 389,289 389,295 388,295 388,290 387,290 387,294 386,294 386,292 385,292 385,288 384,288 384,291 383,291 383,292 382,292 382,289 381,289 381,292 380,292 380,293 379,293 379,290 378,290 378,289 377,289 377,291 376,291 376,290 375,290 375,289 374,289 374,288 373,288 373,296 372,296 372,288 371,288 371,289 370,289 370,285 369,285 369,286 368,286 368,289 367,289 367,287 366,287 366,287 365,287 365,287 364,287 364,288 363,288 363,287 362,287 362,293 361,293 361,283 360,283 360,288 359,288 359,286 358,286 358,287 357,287 357,286 356,286 356,291 355,291 355,286 354,286 354,291 353,291 353,286 352,286 352,289 351,289 351,287 350,287 350,293 349,293 349,288 348,288 348,286 347,286 347,288 346,288 346,288 345,288 345,291 344,291 344,289 343,289 343,288 342,288 342,286 341,286 341,294 340,294 340,286 339,286 339,287 338,287 338,288 337,288 337,287 336,287 336,292 335,292 335,287 334,287 334,284 333,284 333,286 332,286 332,292 331,292 331,287 330,287 330,289 329,289 329,283 328,283 328,293 327,293 327,287 326,287 326,290 325,290 325,292 324,292 324,288 323,288 323,286 322,286 322,286 321,286 321,287 320,287 320,292 319,292 319,284 318,284 318,290 317,290 317,287 316,287 316,287 315,287 315,286 314,286 314,283 313,283 313,290 312,290 312,292 311,292 311,292 310,292 310,288 309,288 309,287 308,287 308,286 307,286 307,288 306,288 306,288 305,288 305,286 304,286 304,293 303,293 303,284 302,284 302,286 301,286 301,288 300,288 300,287 299,287 299,284 298,284 298,289 297,289 297,286 296,286 296,287 295,287 295,286 294,286 294,288 293,288 293,288 292,288 292,288 291,288 291,287 290,287 290,287 289,287 289,286 288,286 288,290 287,290 287,288 286,288 286,286 285,286 285,286 284,286 284,288 283,288 283,288 282,288 282,286 281,286 281,286 280,286 280,288 279,288 279,287 278,287 278,288 277,288 277,285 276,285 276,288 275,288 275,288 274,288 274,286 273,286 273,287 272,287 272,286 271,286 271,288 270,288 270,286 269,286 269,284 268,284 268,288 267,288 267,288 266,288 266,289 265,289 265,288 264,288 264,287 263,287 263,282 262,282 262,286 261,286 261,286 260,286 260,288 259,288 259,288 258,288 258,286 257,286 257,293 256,293 256,287 255,287 255,284 254,284 254,291 253,291 253,288 252,288 252,286 251,286 251,289 250,289 250,286 249,286 249,287 248,287 248,287 247,287 247,291 246,291 246,288 245,288 245,291 244,291 244,288 243,288 243,290 242,290 242,288 241,288 241,286 240,286 240,283 239,283 239,289 238,289 238,288 237,288 237,287 236,287 236,287 235,287 235,288 234,288 234,286 233,286 233,289 232,289 232,288 231,288 231,288 230,288 230,289 229,289 229,286 228,286 228,284 227,284 227,273 226,273 226,270 225,270 225,285 224,285 224,289 223,289 223,289 222,289 222,287 221,287 221,282 220,282 220,285 219,285 219,286 218,286 218,290 217,290 217,287 216,287 216,289 215,289 215,286 214,286 214,286 213,286 213,287 212,287 212,284 211,284 211,285 210,285 210,286 209,286 209,284 208,284 208,290 207,290 207,287 206,287 206,286 205,286 205,286 204,286 204,285 203,285 203,283 202,283 202,284 201,284 201,286 200,286 200,287 199,287 199,290 198,290 198,283 197,283 197,285 196,285 196,286 195,286 195,285 194,285 194,286 193,286 193,270 192,270 192,272 191,272 191,282 190,282 190,283 189,283 189,282 188,282 188,281 187,281 187,286 186,286 186,282 185,282 185,283 184,283 184,277 183,277 183,284 182,284 182,282 181,282 181,282 180,282 180,277 179,277 179,283 178,283 178,282 177,282 177,288 176,288 176,283 175,283 175,284 174,284 174,282 173,282 173,283 172,283 172,281 171,281 171,285 170,285 170,283 169,283 169,281 168,281 168,283 167,283 167,283 166,283 166,283 165,283 165,281 164,281 164,282 163,282 163,284 162,284 162,280 161,280 161,281 160,281 160,283 159,283 159,281 158,281 158,281 157,281 157,283 156,283 156,282 155,282 155,282 154,282 154,279 153,279 153,281 152,281 152,284 151,284 151,288 150,288 150,282 149,282 149,284 148,284 148,279 147,279 147,282 146,282 146,281 145,281 145,282 144,282 144,284 143,284" fill="#6464dc"/><rect x="134" y="265" width="9" height="1" fill="#3232c8"/><polygon points="143,349 144,349 144,365 145,365 145,366 146,366 146,365 147,365 147,379 148,379 148,365 149,365 149,362 150,362 150,363 151,363 151,363 152,363 152,373 153,373 153,351 154,351 154,364 155,364 155,364 156,364 156,357 157,357 157,364 158,364 158,363 159,363 159,372 160,372 160,363 161,363 161,364 162,364 162,365 163,365 163,371 164,371 164,363 165,363 165,365 166,365 166,363 167,363 167,353 168,353 168,363 169,363 169,364 170,364 170,370 171,370 171,364 172,364 172,365 173,365 173,373 174,373 174,364 175,364 175,364 176,364 176,364 177,364 177,365 178,365 178,365 179,365 179,363 180,363 180,366 181,366 181,365 182,365 182,363 183,363 183,368 184,368 184,363 185,363 185,364 186,364 186,362 187,362 187,365 188,365 188,365 189,365 189,362 190,362 190,366 191,366 191,365 192,365 192,366 193,366 193,354 194,354 194,354 195,354 195,355 196,355 196,354 197,354 197,359 198,359 198,353 199,353 199,352 200,352 200,354 201,354 201,353 202,353 202,368 203,368 203,353 204,353 204,355 205,355 205,353 206,353 206,354 207,354 207,355 208,355 208,364 209,364 209,352 210,352 210,354 211,354 211,356 212,356 212,353 213,353 213,345 214,345 214,355 215,355 215,354 216,354 216,352 217,352 217,354 218,354 218,355 219,355 219,353 220,353 220,353 221,353 221,352 222,352 222,355 223,355 223,355 224,355 224,355 225,355 225,379 226,379 226,380 227,380 227,346 228,346 228,350 229,350 229,346 230,346 230,346 231,346 231,345 232,345 232,347 233,347 233,360 234,360 234,349 235,349 235,346 236,346 236,345 237,345 237,346 238,346 238,354 239,354 239,346 240,346 240,351 241,351 241,346 242,346 242,346 243,346 243,349 244,349 244,346 245,346 245,356 246,356 246,350 247,350 247,346 248,346 248,345 249,345 249,359 250,359 250,345 251,345 251,346 252,346 252,345 253,345 253,346 254,346 254,349 255,349 255,346 256,346 256,356 257,356 257,347 258,347 258,345 259,345 259,346 260,346 260,354 261,354 261,351 262,351 262,346 263,346 263,348 264,348 264,346 265,346 265,345 266,345 266,346 267,346 267,345 268,345 268,346 269,346 269,346 270,346 270,354 271,354 271,349 272,349 272,349 273,349 273,349 274,349 274,348 275,348 275,346 276,346 276,346 277,346 277,346 278,346 278,347 279,347 279,346 280,346 280,346 281,346 281,345 282,345 282,350 283,350 283,345 284,345 284,350 285,350 285,358 286,358 286,347 287,347 287,346 288,346 288,346 289,346 289,349 290,349 290,353 291,353 291,354 292,354 292,347 293,347 293,345 294,345 294,347 295,347 295,354 296,354 296,346 297,346 297,349 298,349 298,353 299,353 299,349 300,349 300,345 301,345 301,350 302,350 302,346 303,346 303,346 304,346 304,345 305,345 305,346 306,346 306,346 307,346 307,345 308,345 308,362 309,362 309,345 310,345 310,348 311,348 311,348 312,348 312,348 313,348 313,345 314,345 314,346 315,346 315,348 316,348 316,347 317,347 317,345 318,345 318,346 319,346 319,346 320,346 320,345 321,345 321,352 322,352 322,345 323,345 323,345 324,345 324,345 325,345 325,346 326,346 326,347 327,347 327,345 328,345 328,351 329,351 329,349 330,349 330,346 331,346 331,346 332,346 332,350 333,350 333,348 334,348 334,346 335,346 335,351 336,351 336,345 337,345 337,348 338,348 338,348 339,348 339,353 340,353 340,346 341,346 341,345 342,345 342,348 343,348 343,350 344,350 344,345 345,345 345,348 346,348 346,346 347,346 347,345 348,345 348,347 349,347 349,350 350,350 350,347 351,347 351,350 352,350 352,346 353,346 353,348 354,348 354,353 355,353 355,346 356,346 356,346 357,346 357,346 358,346 358,346 359,346 359,345 360,345 360,345 361,345 361,346 362,346 362,346 363,346 363,356 364,356 364,346 365,346 365,345 366,345 366,345 367,345 367,360 368,360 368,347 369,347 369,348 370,348 370,345 371,345 371,346 372,346 372,345 373,345 373,355 374,355 374,360 375,360 375,357 376,357 376,347 377,347 377,349 378,349 378,347 379,347 379,346 380,346 380,350 381,350 381,354 382,354 382,345 383,345 383,345 384,345 384,346 385,346 385,355 386,355 386,349 387,349 387,347 388,347 388,359 389,359 389,345 390,345 390,347 391,347 391,346 392,346 392,349 393,349 393,364 394,364 394,346 395,346 395,346 396,346 396,361 397,361 397,345 398,345 398,346 399,346 399,347 400,347 400,346 401,346 401,361 402,361 402,352 403,352 403,346 404,346 404,352 405,352 405,345 406,345 406,345 407,345 407,347 408,347 408,345 409,345 409,346 410,346 410,353 411,353 411,346 412,346 412,345 413,345 413,349 414,349 414,345 415,345 415,346 416,346 416,350 417,350 417,350 418,350 418,345 419,345 419,362 420,362 420,363 421,363 421,348 422,348 422,347 423,347 423,359 424,359 424,347 425,347 425,346 426,346 426,346 427,346 427,346 428,346 428,346 429,346 429,350 430,350 430,345 431,345 431,351 432,351 432,349 433,349 433,346 434,346 434,349 435,349 435,347 436,347 436,347 437,347 437,350 438,350 438,352 439,352 439,353 440,353 440,352 441,352 441,349 442,349 442,355 443,355 443,355 444,355 444,362 445,362 445,349 446,349 446,355 447,355 447,354 448,354 448,351 449,351 449,350 450,350 450,355 451,355 451,349 452,349 452,352 453,352 453,349 454,349 454,351 455,351 455,353 456,353 456,345 457,345 457,353 458,353 458,362 459,362 459,355 460,355 460,353 461,353 461,351 462,351 462,350 463,350 463,353 464,353 464,352 465,352 465,355 466,355 466,352 467,352 467,361 468,361 468,350 469,350 469,353 470,353 470,348 471,348 471,354 472,354 472,350 473,350 473,350 474,350 474,350 475,350 475,351 476,351 476,348 477,348 477,346 478,346 478,345 479,345 479,345 480,345 480,346 481,346 481,346 482,346 482,350 483,350 483,347 484,347 484,346 485,346 485,346 486,346 486,351 487,351 487,346 488,346 488,347 489,347 489,346 490,346 490,346 491,346 491,354 492,354 492,348 493,348 493,350 494,350 494,356 495,356 495,347 496,347 496,349 497,349 497,346 498,346 498,346 499,346 499,363 500,363 500,349 501,349 501,346 502,346 502,350 503,350 503,359 504,359 504,363 505,363 505,346 506,346 506,352 507,352 507,356 508,356 508,347 509,347 509,346 510,346 510,355 511,355 511,346 512,346 512,355 513,355 513,347 514,347 514,348 515,348 515,345 516,345 516,350 517,350 517,345 518,345 518,355 519,355 519,348 520,348 520,352 521,352 521,346 522,346 522,355 523,355 523,348 524,348 524,348 525,348 525,345 526,345 526,349 527,349 527,346 528,346 528,346 529,346 529,346 530,346 530,362 531,362 531,349 532,349 532,349 533,349 533,347 534,347 534,350 535,350 535,346 536,346 536,345 537,345 537,346 538,346 538,346 539,346 539,348 540,348 540,346 541,346 541,347 542,347 542,366 543,366 543,349 544,349 544,350 545,350 545,345 546,345 546,355 547,355 547,348 548,348 548,361 549,361 549,349 550,349 550,346 551,346 551,349 552,349 552,346 553,346 553,345 554,345 554,346 555,346 555,345 556,345 556,346 557,346 557,345 558,345 558,346 559,346 559,349 560,349 560,348 561,348 561,352 562,352 562,350 563,350 563,346 564,346 564,346 565,346 565,347 566,347 566,346 567,346 567,346 568,346 568,346 569,346 569,350 570,350 570,364 571,364 571,348 572,348 572,348 573,348 573,348 574,348 574,345 575,345 575,349 576,349 576,350 577,350 577,346 578,346 578,345 579,345 579,345 580,345 580,346 581,346 581,351 582,351 582,350 583,350 583,346 584,346 584,350 585,350 585,349 586,349 586,348 587,348 587,349 588,349 588,353 589,353 589,346 590,346 590,346 591,346 591,363 592,363 592,347 593,347 593,350 594,350 594,348 595,348 595,345 596,345 596,360 597,360 597,346 598,346 598,350 599,350 599,347 600,347 600,346 601,346 601,349 602,349 602,354 603,354 603,352 604,352 604,346 605,346 605,345 606,345 606,346 607,346 607,349 608,349 608,346 609,346 609,350 610,350 610,346 611,346 611,346 612,346 612,354 613,354 613,346 614,346 614,348 615,348 615,354 616,354 616,365 617,365 617,355 618,355 618,352 619,352 619,349 620,349 620,356 621,356 621,375 622,375 622,348 623,348 623,350 624,350 624,369 625,369 625,364 626,364 626,345 627,345 627,346 628,346 628,374 629,374 629,346 630,346 630,362 631,362 631,348 632,348 632,373 633,373 633,347 634,347 634,379 635,379 635,354 636,354 636,359 637,359 637,359 638,359 638,346 639,346 639,348 640,348 640,354 641,354 641,355 642,355 642,351 643,351 643,346 644,346 644,346 645,346 645,350 646,350 646,362 647,362 647,353 648,353 648,349 649,349 649,346 650,346 650,366 651,366 651,351 652,351 652,348 653,348 653,345 654,345 654,346 655,346 655,347 656,347 656,350 657,350 657,352 658,352 658,346 659,346 659,347 660,347 660,350 661,350 661,345 662,345 662,356 663,356 663,346 664,346 664,345 665,345 665,346 666,346 666,346 667,346 667,346 668,346 668,359 669,359 669,348 670,348 670,363 671,363 671,348 672,348 672,354 673,354 673,346 674,346 674,348 675,348 675,345 676,345 676,347 677,347 677,345 678,345 678,350 679,350 679,346 680,346 680,346 681,346 681,349 682,349 682,348 683,348 683,347 684,347 684,345 685,345 685,352 686,352 686,353 687,353 687,346 688,346 688,345 689,345 689,354 690,354 690,345 691,345 691,345 692,345 692,352 693,352 693,352 694,352 694,360 695,360 695,346 696,346 696,352 697,352 697,352 698,352 698,354 699,354 699,357 700,357 700,353 701,353 701,353 702,353 702,346 703,346 703,358 704,358 704,355 705,355 705,345 706,345 706,358 707,358 707,352 708,352 708,350 709,350 709,350 710,350 710,354 711,354 711,354 712,354 712,351 713,351 713,353 714,353 714,354 715,354 715,352 716,352 716,345 717,345 717,352 718,352 718,355 719,355 719,347 720,347 720,351 721,351 721,351 722,351 722,391 723,391 723,397 724,397 724,402 725,402 725,405 726,405 726,408 727,408 727,410 728,410 728,411 729,411 729,412 730,412 730,413 731,413 731,414 732,414 732,414 733,414 733,415 734,415 734,415 735,415 735,416 734,416 734,416 733,416 733,417 732,417 732,417 731,417 731,418 730,418 730,419 729,419 729,420 728,420 728,421 727,421 727,423 726,423 726,426 725,426 725,429 724,429 724,434 723,434 723,440 722,440 722,485 721,485 721,473 720,473 720,480 719,480 719,482 718,482 718,471 717,471 717,479 716,479 716,479 715,479 715,477 714,477 714,482 713,482 713,476 712,476 712,479 711,479 711,480 710,480 710,477 709,477 709,477 708,477 708,480 707,480 707,477 706,477 706,472 705,472 705,479 704,479 704,480 703,480 703,486 702,486 702,480 701,480 701,478 700,478 700,477 699,477 699,471 698,471 698,470 697,470 697,479 696,479 696,479 695,479 695,478 694,478 694,479 693,479 693,485 692,485 692,481 691,481 691,482 690,482 690,486 689,486 689,481 688,481 688,479 687,479 687,479 686,479 686,484 685,484 685,482 684,482 684,479 683,479 683,482 682,482 682,484 681,484 681,482 680,482 680,485 679,485 679,482 678,482 678,479 677,479 677,482 676,482 676,486 675,486 675,481 674,481 674,477 673,477 673,485 672,485 672,482 671,482 671,478 670,478 670,479 669,479 669,485 668,485 668,485 667,485 667,484 666,484 666,485 665,485 665,485 664,485 664,486 663,486 663,485 662,485 662,485 661,485 661,486 660,486 660,483 659,483 659,481 658,481 658,486 657,486 657,480 656,480 656,485 655,485 655,485 654,485 654,485 653,485 653,481 652,481 652,477 651,477 651,485 650,485 650,485 649,485 649,485 648,485 648,480 647,480 647,466 646,466 646,472 645,472 645,485 644,485 644,480 643,480 643,457 642,457 642,483 641,483 641,476 640,476 640,483 639,483 639,480 638,480 638,476 637,476 637,474 636,474 636,482 635,482 635,465 634,465 634,484 633,484 633,479 632,479 632,484 631,484 631,459 630,459 630,469 629,469 629,461 628,461 628,455 627,455 627,484 626,484 626,459 625,459 625,483 624,483 624,466 623,466 623,480 622,480 622,479 621,479 621,458 620,458 620,482 619,482 619,483 618,483 618,482 617,482 617,483 616,483 616,479 615,479 615,466 614,466 614,485 613,485 613,483 612,483 612,485 611,485 611,476 610,476 610,485 609,485 609,485 608,485 608,485 607,485 607,475 606,475 606,484 605,484 605,483 604,483 604,486 603,486 603,485 602,485 602,481 601,481 601,485 600,485 600,485 599,485 599,485 598,485 598,484 597,484 597,481 596,481 596,478 595,478 595,483 594,483 594,480 593,480 593,485 592,485 592,481 591,481 591,485 590,485 590,485 589,485 589,485 588,485 588,486 587,486 587,484 586,484 586,475 585,475 585,485 584,485 584,471 583,471 583,486 582,486 582,485 581,485 581,465 580,465 580,481 579,481 579,483 578,483 578,486 577,486 577,485 576,485 576,481 575,481 575,485 574,485 574,485 573,485 573,479 572,479 572,482 571,482 571,485 570,485 570,481 569,481 569,481 568,481 568,486 567,486 567,482 566,482 566,483 565,483 565,479 564,479 564,481 563,481 563,484 562,484 562,485 561,485 561,477 560,477 560,485 559,485 559,473 558,473 558,482 557,482 557,475 556,475 556,483 555,483 555,484 554,484 554,485 553,485 553,476 552,476 552,485 551,485 551,485 550,485 550,484 549,484 549,484 548,484 548,485 547,485 547,483 546,483 546,486 545,486 545,485 544,485 544,484 543,484 543,481 542,481 542,486 541,486 541,481 540,481 540,485 539,485 539,467 538,467 538,486 537,486 537,485 536,485 536,469 535,469 535,485 534,485 534,482 533,482 533,485 532,485 532,484 531,484 531,483 530,483 530,485 529,485 529,485 528,485 528,481 527,481 527,484 526,484 526,477 525,477 525,486 524,486 524,473 523,473 523,486 522,486 522,473 521,473 521,485 520,485 520,485 519,485 519,485 518,485 518,478 517,478 517,485 516,485 516,485 515,485 515,482 514,482 514,485 513,485 513,482 512,482 512,485 511,485 511,486 510,486 510,477 509,477 509,485 508,485 508,472 507,472 507,486 506,486 506,485 505,485 505,481 504,481 504,486 503,486 503,485 502,485 502,486 501,486 501,486 500,486 500,485 499,485 499,482 498,482 498,485 497,485 497,485 496,485 496,485 495,485 495,469 494,469 494,479 493,479 493,477 492,477 492,485 491,485 491,485 490,485 490,482 489,482 489,483 488,483 488,485 487,485 487,476 486,476 486,485 485,485 485,486 484,486 484,480 483,480 483,483 482,483 482,481 481,481 481,485 480,485 480,478 479,478 479,486 478,486 478,486 477,486 477,485 476,485 476,481 475,481 475,482 474,482 474,482 473,482 473,486 472,486 472,479 471,479 471,477 470,477 470,477 469,477 469,481 468,481 468,482 467,482 467,478 466,478 466,480 465,480 465,479 464,479 464,474 463,474 463,479 462,479 462,480 461,480 461,479 460,479 460,483 459,483 459,480 458,480 458,479 457,479 457,481 456,481 456,481 455,481 455,479 454,479 454,480 453,480 453,479 452,479 452,483 451,483 451,479 450,479 450,485 449,485 449,477 448,477 448,485 447,485 447,478 446,478 446,478 445,478 445,479 444,479 444,480 443,480 443,486 442,486 442,478 441,478 441,481 440,481 440,477 439,477 439,477 438,477 438,477 437,477 437,482 436,482 436,485 435,485 435,486 434,486 434,485 433,485 433,476 432,476 432,484 431,484 431,477 430,477 430,477 429,477 429,477 428,477 428,484 427,484 427,470 426,470 426,481 425,481 425,485 424,485 424,485 423,485 423,482 422,482 422,481 421,481 421,485 420,485 420,485 419,485 419,484 418,484 418,482 417,482 417,486 416,486 416,483 415,483 415,486 414,486 414,485 413,485 413,485 412,485 412,485 411,485 411,485 410,485 410,486 409,486 409,482 408,482 408,480 407,480 407,477 406,477 406,477 405,477 405,478 404,478 404,485 403,485 403,485 402,485 402,484 401,484 401,468 400,468 400,486 399,486 399,472 398,472 398,485 397,485 397,486 396,486 396,480 395,480 395,486 394,486 394,482 393,482 393,485 392,485 392,484 391,484 391,486 390,486 390,482 389,482 389,482 388,482 388,486 387,486 387,486 386,486 386,485 385,485 385,482 384,482 384,486 383,486 383,485 382,485 382,482 381,482 381,486 380,486 380,477 379,477 379,486 378,486 378,479 377,479 377,485 376,485 376,484 375,484 375,481 374,481 374,484 373,484 373,481 372,481 372,486 371,486 371,477 370,477 370,484 369,484 369,485 368,485 368,482 367,482 367,486 366,486 366,485 365,485 365,485 364,485 364,483 363,483 363,482 362,482 362,485 361,485 361,485 360,485 360,484 359,484 359,483 358,483 358,486 357,486 357,486 356,486 356,480 355,480 355,485 354,485 354,486 353,486 353,484 352,484 352,466 351,466 351,481 350,481 350,485 349,485 349,479 348,479 348,485 347,485 347,484 346,484 346,482 345,482 345,486 344,486 344,485 343,485 343,485 342,485 342,483 341,483 341,481 340,481 340,475 339,475 339,483 338,483 338,486 337,486 337,485 336,485 336,485 335,485 335,482 334,482 334,485 333,485 333,479 332,479 332,485 331,485 331,481 330,481 330,486 329,486 329,485 328,485 328,486 327,486 327,481 326,481 326,486 325,486 325,483 324,483 324,482 323,482 323,485 322,485 322,486 321,486 321,472 320,472 320,477 319,477 319,482 318,482 318,485 317,485 317,485 316,485 316,486 315,486 315,481 314,481 314,486 313,486 313,483 312,483 312,486 311,486 311,465 310,465 310,485 309,485 309,485 308,485 308,484 307,484 307,476 306,476 306,480 305,480 305,485 304,485 304,486 303,486 303,485 302,485 302,482 301,482 301,485 300,485 300,484 299,484 299,477 298,477 298,473 297,473 297,486 296,486 296,485 295,485 295,485 294,485 294,484 293,484 293,478 292,478 292,485 291,485 291,479 290,479 290,485 289,485 289,481 288,481 288,471 287,471 287,481 286,481 286,484 285,484 285,485 284,485 284,477 283,477 283,483 282,483 282,486 281,486 281,481 280,481 280,482 279,482 279,486 278,486 278,485 277,485 277,484 276,484 276,485 275,485 275,483 274,483 274,475 273,475 273,486 272,486 272,485 271,485 271,483 270,483 270,486 269,486 269,484 268,484 268,482 267,482 267,480 266,480 266,485 265,485 265,486 264,486 264,486 263,486 263,485 262,485 262,483 261,483 261,478 260,478 260,475 259,475 259,481 258,481 258,484 257,484 257,485 256,485 256,486 255,486 255,482 254,482 254,478 253,478 253,485 252,485 252,483 251,483 251,484 250,484 250,475 249,475 249,476 248,476 248,484 247,484 247,485 246,485 246,485 245,485 245,485 244,485 244,483 243,483 243,485 242,485 242,482 241,482 241,485 240,485 240,483 239,483 239,485 238,485 238,477 237,477 237,484 236,484 236,481 235,481 235,485 234,485 234,476 233,476 233,473 232,473 232,485 231,485 231,486 230,486 230,468 229,468 229,478 228,478 228,485 227,485 227,461 226,461 226,455 225,455 225,472 224,472 224,473 223,473 223,473 222,473 222,474 221,474 221,472 220,472 220,471 219,471 219,473 218,473 218,475 217,475 217,475 216,475 216,471 215,471 215,472 214,472 214,471 213,471 213,472 212,472 212,471 211,471 211,471 210,471 210,472 209,472 209,472 208,472 208,482 207,482 207,472 206,472 206,470 205,470 205,472 204,472 204,472 203,472 203,480 202,480 202,473 201,473 201,474 200,474 200,472 199,472 199,468 198,468 198,471 197,471 197,462 196,462 196,472 195,472 195,471 194,471 194,471 193,471 193,465 192,465 192,462 191,462 191,473 190,473 190,473 189,473 189,472 188,472 188,480 187,480 187,474 186,474 186,471 185,471 185,474 184,474 184,472 183,472 183,474 182,474 182,473 181,473 181,471 180,471 180,474 179,474 179,473 178,473 178,472 177,472 177,471 176,471 176,472 175,472 175,473 174,473 174,472 173,472 173,473 172,473 172,480 171,480 171,467 170,467 170,474 169,474 169,475 168,475 168,474 167,474 167,473 166,473 166,474 165,474 165,473 164,473 164,473 163,473 163,474 162,474 162,472 161,472 161,472 160,472 160,475 159,475 159,473 158,473 158,472 157,472 157,472 156,472 156,474 155,474 155,472 154,472 154,471 153,471 153,475 152,475 152,474 151,474 151,474 150,474 150,461 149,461 149,482 148,482 148,479 147,479 147,472 146,472 146,476 145,476 145,462 144,462 144,483 143,483" fill="#3232c8"/><polygon points="143,399 144,399 144,399 145,399 145,399 146,399 146,397 147,397 147,399 148,399 148,396 149,396 149,396 150,396 150,399 151,399 151,399 152,399 152,400 153,400 153,398 154,398 154,398 155,398 155,397 156,397 156,397 157,397 157,397 158,397 158,397 159,397 159,398 160,398 160,401 161,401 161,399 162,399 162,399 163,399 163,402 164,402 164,399 165,399 165,400 166,400 166,396 167,396 167,400 168,400 168,396 169,396 169,394 170,394 170,398 171,398 171,398 172,398 172,398 173,398 173,398 174,398 174,398 175,398 175,399 176,399 176,393 177,393 177,399 178,399 178,397 179,397 179,398 180,398 180,396 181,396 181,393 182,393 182,399 183,399 183,400 184,400 184,397 185,397 185,398 186,398 186,398 187,398 187,399 188,399 188,397 189,397 189,399 190,399 190,398 191,398 191,408 192,408 192,410 193,410 193,396 194,396 194,396 195,396 195,396 196,396 196,391 197,391 197,396 198,396 198,397 199,397 199,396 200,396 200,396 201,396 201,396 202,396 202,394 203,394 203,395 204,395 204,392 205,392 205,397 206,397 206,393 207,393 207,396 208,396 208,395 209,395 209,396 210,396 210,397 211,397 211,394 212,394 212,396 213,396 213,391 214,391 214,396 215,396 215,395 216,395 216,394 217,394 217,395 218,395 218,391 219,391 219,391 220,391 220,395 221,395 221,398 222,398 222,399 223,399 223,394 224,394 224,397 225,397 225,410 226,410 226,408 227,408 227,389 228,389 228,392 229,392 229,392 230,392 230,392 231,392 231,392 232,392 232,392 233,392 233,394 234,394 234,389 235,389 235,393 236,393 236,394 237,394 237,388 238,388 238,392 239,392 239,392 240,392 240,393 241,393 241,395 242,395 242,394 243,394 243,392 244,392 244,394 245,394 245,394 246,394 246,392 247,392 247,392 248,392 248,388 249,388 249,396 250,396 250,392 251,392 251,389 252,389 252,390 253,390 253,395 254,395 254,394 255,394 255,395 256,395 256,394 257,394 257,394 258,394 258,393 259,393 259,393 260,393 260,387 261,387 261,394 262,394 262,393 263,393 263,393 264,393 264,393 265,393 265,393 266,393 266,394 267,394 267,392 268,392 268,392 269,392 269,389 270,389 270,394 271,394 271,394 272,394 272,394 273,394 273,392 274,392 274,389 275,389 275,390 276,390 276,393 277,393 277,393 278,393 278,394 279,394 279,396 280,396 280,394 281,394 281,390 282,390 282,392 283,392 283,387 284,387 284,394 285,394 285,396 286,396 286,390 287,390 287,392 288,392 288,395 289,395 289,393 290,393 290,395 291,395 291,392 292,392 292,392 293,392 293,394 294,394 294,392 295,392 295,393 296,393 296,397 297,397 297,391 298,391 298,393 299,393 299,392 300,392 300,393 301,393 301,393 302,393 302,394 303,394 303,394 304,394 304,394 305,394 305,396 306,396 306,388 307,388 307,393 308,393 308,394 309,394 309,394 310,394 310,393 311,393 311,394 312,394 312,394 313,394 313,394 314,394 314,392 315,392 315,394 316,394 316,393 317,393 317,394 318,394 318,393 319,393 319,394 320,394 320,394 321,394 321,392 322,392 322,390 323,390 323,394 324,394 324,393 325,393 325,388 326,388 326,394 327,394 327,393 328,393 328,392 329,392 329,389 330,389 330,394 331,394 331,392 332,392 332,394 333,394 333,394 334,394 334,394 335,394 335,392 336,392 336,389 337,389 337,392 338,392 338,393 339,393 339,393 340,393 340,392 341,392 341,395 342,395 342,392 343,392 343,388 344,388 344,391 345,391 345,393 346,393 346,392 347,392 347,395 348,395 348,394 349,394 349,392 350,392 350,399 351,399 351,394 352,394 352,393 353,393 353,387 354,387 354,393 355,393 355,395 356,395 356,393 357,393 357,392 358,392 358,391 359,391 359,398 360,398 360,392 361,392 361,394 362,394 362,394 363,394 363,396 364,396 364,394 365,394 365,392 366,392 366,391 367,391 367,389 368,389 368,390 369,390 369,387 370,387 370,389 371,389 371,387 372,387 372,388 373,388 373,390 374,390 374,387 375,387 375,389 376,389 376,388 377,388 377,388 378,388 378,386 379,386 379,391 380,391 380,390 381,390 381,389 382,389 382,387 383,387 383,389 384,389 384,384 385,384 385,390 386,390 386,383 387,383 387,388 388,388 388,391 389,391 389,388 390,388 390,384 391,384 391,385 392,385 392,389 393,389 393,387 394,387 394,390 395,390 395,383 396,383 396,389 397,389 397,389 398,389 398,390 399,390 399,390 400,390 400,389 401,389 401,390 402,390 402,394 403,394 403,389 404,389 404,390 405,390 405,391 406,391 406,390 407,390 407,394 408,394 408,393 409,393 409,389 410,389 410,389 411,389 411,389 412,389 412,391 413,391 413,391 414,391 414,389 415,389 415,385 416,385 416,391 417,391 417,386 418,386 418,386 419,386 419,391 420,391 420,390 421,390 421,390 422,390 422,391 423,391 423,385 424,385 424,390 425,390 425,389 426,389 426,388 427,388 427,386 428,386 428,386 429,386 429,391 430,391 430,388 431,388 431,391 432,391 432,385 433,385 433,389 434,389 434,389 435,389 435,392 436,392 436,390 437,390 437,390 438,390 438,382 439,382 439,392 440,392 440,390 441,390 441,390 442,390 442,391 443,391 443,390 444,390 444,390 445,390 445,391 446,391 446,385 447,385 447,389 448,389 448,391 449,391 449,390 450,390 450,391 451,391 451,388 452,388 452,391 453,391 453,391 454,391 454,391 455,391 455,389 456,389 456,390 457,390 457,385 458,385 458,391 459,391 459,392 460,392 460,387 461,387 461,391 462,391 462,391 463,391 463,391 464,391 464,385 465,385 465,390 466,390 466,390 467,390 467,390 468,390 468,390 469,390 469,389 470,389 470,389 471,389 471,392 472,392 472,390 473,390 473,390 474,390 474,391 475,391 475,389 476,389 476,390 477,390 477,391 478,391 478,390 479,390 479,392 480,392 480,389 481,389 481,391 482,391 482,390 483,390 483,393 484,393 484,391 485,391 485,389 486,389 486,390 487,390 487,389 488,389 488,390 489,390 489,390 490,390 490,393 491,393 491,385 492,385 492,384 493,384 493,390 494,390 494,390 495,390 495,390 496,390 496,391 497,391 497,389 498,389 498,389 499,389 499,392 500,392 500,389 501,389 501,391 502,391 502,384 503,384 503,389 504,389 504,385 505,385 505,390 506,390 506,384 507,384 507,387 508,387 508,389 509,389 509,391 510,391 510,391 511,391 511,390 512,390 512,389 513,389 513,389 514,389 514,390 515,390 515,391 516,391 516,390 517,390 517,390 518,390 518,388 519,388 519,392 520,392 520,385 521,385 521,391 522,391 522,388 523,388 523,386 524,386 524,390 525,390 525,388 526,388 526,385 527,385 527,390 528,390 528,391 529,391 529,389 530,389 530,387 531,387 531,383 532,383 532,390 533,390 533,386 534,386 534,391 535,391 535,390 536,390 536,387 537,387 537,391 538,391 538,385 539,385 539,387 540,387 540,387 541,387 541,386 542,386 542,387 543,387 543,383 544,383 544,386 545,386 545,383 546,383 546,389 547,389 547,385 548,385 548,387 549,387 549,388 550,388 550,391 551,391 551,384 552,384 552,387 553,387 553,386 554,386 554,388 555,388 555,388 556,388 556,388 557,388 557,386 558,386 558,391 559,391 559,388 560,388 560,387 561,387 561,380 562,380 562,383 563,383 563,387 564,387 564,388 565,388 565,386 566,386 566,391 567,391 567,383 568,383 568,387 569,387 569,383 570,383 570,388 571,388 571,386 572,386 572,390 573,390 573,388 574,388 574,388 575,388 575,388 576,388 576,388 577,388 577,387 578,387 578,385 579,385 579,386 580,386 580,386 581,386 581,386 582,386 582,385 583,385 583,388 584,388 584,387 585,387 585,387 586,387 586,387 587,387 587,386 588,386 588,386 589,386 589,386 590,386 590,388 591,388 591,388 592,388 592,387 593,387 593,387 594,387 594,387 595,387 595,386 596,386 596,387 597,387 597,387 598,387 598,383 599,383 599,388 600,388 600,387 601,387 601,381 602,381 602,387 603,387 603,384 604,384 604,388 605,388 605,386 606,386 606,386 607,386 607,390 608,390 608,388 609,388 609,382 610,382 610,387 611,387 611,389 612,389 612,388 613,388 613,388 614,388 614,387 615,387 615,387 616,387 616,392 617,392 617,398 618,398 618,398 619,398 619,396 620,396 620,396 621,396 621,398 622,398 622,397 623,397 623,398 624,398 624,396 625,396 625,399 626,399 626,393 627,393 627,398 628,398 628,399 629,399 629,398 630,398 630,396 631,396 631,394 632,394 632,390 633,390 633,399 634,399 634,396 635,396 635,399 636,399 636,397 637,397 637,398 638,398 638,394 639,394 639,399 640,399 640,393 641,393 641,397 642,397 642,394 643,394 643,385 644,385 644,389 645,389 645,388 646,388 646,389 647,389 647,390 648,390 648,388 649,388 649,388 650,388 650,389 651,389 651,389 652,389 652,385 653,385 653,387 654,387 654,392 655,392 655,392 656,392 656,389 657,389 657,388 658,388 658,385 659,385 659,389 660,389 660,389 661,389 661,388 662,388 662,385 663,385 663,388 664,388 664,390 665,390 665,389 666,389 666,388 667,388 667,389 668,389 668,389 669,389 669,388 670,388 670,390 671,390 671,387 672,387 672,388 673,388 673,388 674,388 674,390 675,390 675,390 676,390 676,390 677,390 677,388 678,388 678,388 679,388 679,388 680,388 680,390 681,390 681,388 682,388 682,387 683,387 683,390 684,390 684,390 685,390 685,389 686,389 686,389 687,389 687,389 688,389 688,389 689,389 689,384 690,384 690,388 691,388 691,389 692,389 692,389 693,389 693,389 694,389 694,385 695,385 695,389 696,389 696,389 697,389 697,390 698,390 698,392 699,392 699,389 700,389 700,384 701,384 701,388 702,388 702,386 703,386 703,390 704,390 704,384 705,384 705,388 706,388 706,389 707,389 707,385 708,385 708,383 709,383 709,391 710,391 710,385 711,385 711,386 712,386 712,388 713,388 713,387 714,387 714,382 715,382 715,388 716,388 716,389 717,389 717,389 718,389 718,389 719,389 719,389 720,389 720,388 721,388 721,389 722,389 722,402 723,402 723,406 724,406 724,408 725,408 725,410 726,410 726,411 727,411 727,412 728,412 728,413 729,413 729,414 730,414 730,414 731,414 731,415 732,415 732,415 733,415 733,415 734,415 734,415 735,415 735,416 734,416 734,416 733,416 733,416 732,416 732,416 731,416 731,417 730,417 730,417 729,417 729,418 728,418 728,419 727,419 727,420 726,420 726,421 725,421 725,423 724,423 724,425 723,425 723,429 722,429 722,439 721,439 721,444 720,444 720,436 719,436 719,440 718,440 718,445 717,445 717,443 716,443 716,441 715,441 715,442 714,442 714,441 713,441 713,437 712,437 712,445 711,445 711,444 710,444 710,439 709,439 709,440 708,440 708,444 707,444 707,444 706,444 706,444 705,444 705,441 704,441 704,445 703,445 703,444 702,444 702,440 701,440 701,441 700,441 700,439 699,439 699,440 698,440 698,440 697,440 697,442 696,442 696,442 695,442 695,445 694,445 694,443 693,443 693,440 692,440 692,442 691,442 691,437 690,437 690,442 689,442 689,440 688,440 688,440 687,440 687,446 686,446 686,436 685,436 685,443 684,443 684,443 683,443 683,440 682,440 682,440 681,440 681,440 680,440 680,445 679,445 679,440 678,440 678,439 677,439 677,437 676,437 676,440 675,440 675,445 674,445 674,443 673,443 673,441 672,441 672,441 671,441 671,441 670,441 670,441 669,441 669,440 668,440 668,441 667,441 667,445 666,445 666,445 665,445 665,441 664,441 664,444 663,444 663,440 662,440 662,441 661,441 661,440 660,440 660,444 659,444 659,440 658,440 658,440 657,440 657,441 656,441 656,440 655,440 655,437 654,437 654,441 653,441 653,445 652,445 652,440 651,440 651,441 650,441 650,442 649,442 649,442 648,442 648,442 647,442 647,441 646,441 646,439 645,439 645,446 644,446 644,442 643,442 643,437 642,437 642,430 641,430 641,434 640,434 640,428 639,428 639,431 638,431 638,432 637,432 637,435 636,435 636,430 635,430 635,430 634,430 634,433 633,433 633,434 632,434 632,432 631,432 631,432 630,432 630,431 629,431 629,432 628,432 628,436 627,436 627,438 626,438 626,432 625,432 625,433 624,433 624,434 623,434 623,430 622,430 622,428 621,428 621,437 620,437 620,430 619,430 619,432 618,432 618,432 617,432 617,436 616,436 616,439 615,439 615,440 614,440 614,444 613,444 613,441 612,441 612,441 611,441 611,446 610,446 610,437 609,437 609,440 608,440 608,440 607,440 607,441 606,441 606,442 605,442 605,445 604,445 604,440 603,440 603,439 602,439 602,442 601,442 601,445 600,445 600,440 599,440 599,440 598,440 598,440 597,440 597,440 596,440 596,440 595,440 595,442 594,442 594,441 593,441 593,442 592,442 592,442 591,442 591,441 590,441 590,440 589,440 589,441 588,441 588,441 587,441 587,441 586,441 586,439 585,439 585,442 584,442 584,440 583,440 583,440 582,440 582,442 581,442 581,446 580,446 580,437 579,437 579,442 578,442 578,445 577,445 577,440 576,440 576,440 575,440 575,440 574,440 574,441 573,441 573,446 572,446 572,440 571,440 571,441 570,441 570,441 569,441 569,442 568,442 568,439 567,439 567,441 566,441 566,445 565,445 565,446 564,446 564,440 563,440 563,443 562,443 562,442 561,442 561,442 560,442 560,439 559,439 559,441 558,441 558,441 557,441 557,440 556,440 556,436 555,436 555,446 554,446 554,441 553,441 553,439 552,439 552,442 551,442 551,439 550,439 550,445 549,445 549,442 548,442 548,442 547,442 547,439 546,439 546,441 545,441 545,440 544,440 544,440 543,440 543,439 542,439 542,444 541,444 541,440 540,440 540,446 539,446 539,439 538,439 538,440 537,440 537,436 536,436 536,435 535,435 535,438 534,438 534,436 533,436 533,436 532,436 532,440 531,440 531,437 530,437 530,436 529,436 529,434 528,434 528,437 527,437 527,443 526,443 526,436 525,436 525,436 524,436 524,442 523,442 523,441 522,441 522,438 521,438 521,436 520,436 520,438 519,438 519,439 518,439 518,438 517,438 517,438 516,438 516,443 515,443 515,437 514,437 514,441 513,441 513,436 512,436 512,436 511,436 511,437 510,437 510,441 509,441 509,438 508,438 508,440 507,440 507,442 506,442 506,437 505,437 505,437 504,437 504,436 503,436 503,436 502,436 502,436 501,436 501,436 500,436 500,438 499,438 499,440 498,440 498,436 497,436 497,436 496,436 496,437 495,437 495,437 494,437 494,438 493,438 493,434 492,434 492,441 491,441 491,437 490,437 490,438 489,438 489,441 488,441 488,442 487,442 487,439 486,439 486,438 485,438 485,435 484,435 484,438 483,438 483,437 482,437 482,438 481,438 481,436 480,436 480,437 479,437 479,440 478,440 478,438 477,438 477,434 476,434 476,440 475,440 475,442 474,442 474,436 473,436 473,437 472,437 472,439 471,439 471,437 470,437 470,436 469,436 469,438 468,438 468,438 467,438 467,444 466,444 466,440 465,440 465,436 464,436 464,438 463,438 463,441 462,441 462,437 461,437 461,442 460,442 460,443 459,443 459,440 458,440 458,437 457,437 457,435 456,435 456,440 455,440 455,437 454,437 454,436 453,436 453,440 452,440 452,433 451,433 451,442 450,442 450,437 449,437 449,440 448,440 448,437 447,437 447,443 446,443 446,441 445,441 445,438 444,438 444,438 443,438 443,436 442,436 442,433 441,433 441,437 440,437 440,438 439,438 439,441 438,441 438,437 437,437 437,436 436,436 436,442 435,442 435,433 434,433 434,436 433,436 433,437 432,437 432,436 431,436 431,437 430,437 430,438 429,438 429,436 428,436 428,437 427,437 427,437 426,437 426,437 425,437 425,439 424,439 424,437 423,437 423,438 422,438 422,433 421,433 421,436 420,436 420,437 419,437 419,437 418,437 418,437 417,437 417,436 416,436 416,440 415,440 415,438 414,438 414,438 413,438 413,436 412,436 412,436 411,436 411,442 410,442 410,442 409,442 409,438 408,438 408,437 407,437 407,438 406,438 406,437 405,437 405,433 404,433 404,436 403,436 403,436 402,436 402,436 401,436 401,436 400,436 400,438 399,438 399,438 398,438 398,438 397,438 397,435 396,435 396,439 395,439 395,439 394,439 394,440 393,440 393,440 392,440 392,442 391,442 391,438 390,438 390,438 389,438 389,438 388,438 388,439 387,439 387,438 386,438 386,436 385,436 385,438 384,438 384,439 383,439 383,441 382,441 382,445 381,445 381,436 380,436 380,434 379,434 379,439 378,439 378,439 377,439 377,439 376,439 376,444 375,444 375,440 374,440 374,438 373,438 373,440 372,440 372,438 371,438 371,438 370,438 370,440 369,440 369,439 368,439 368,435 367,435 367,441 366,441 366,433 365,433 365,436 364,436 364,431 363,431 363,434 362,434 362,439 361,439 361,437 360,437 360,434 359,434 359,436 358,436 358,433 357,433 357,433 356,433 356,434 355,434 355,435 354,435 354,436 353,436 353,437 352,437 352,435 351,435 351,432 350,432 350,433 349,433 349,429 348,429 348,437 347,437 347,435 346,435 346,433 345,433 345,434 344,434 344,435 343,435 343,435 342,435 342,435 341,435 341,433 340,433 340,435 339,435 339,434 338,434 338,433 337,433 337,439 336,439 336,435 335,435 335,433 334,433 334,439 333,439 333,435 332,435 332,434 331,434 331,439 330,439 330,434 329,434 329,434 328,434 328,434 327,434 327,434 326,434 326,438 325,438 325,434 324,434 324,433 323,433 323,439 322,439 322,435 321,435 321,434 320,434 320,435 319,435 319,435 318,435 318,431 317,431 317,438 316,438 316,434 315,434 315,433 314,433 314,434 313,434 313,430 312,430 312,431 311,431 311,438 310,438 310,433 309,433 309,435 308,435 308,435 307,435 307,434 306,434 306,434 305,434 305,434 304,434 304,434 303,434 303,434 302,434 302,434 301,434 301,434 300,434 300,436 299,436 299,433 298,433 298,435 297,435 297,435 296,435 296,439 295,439 295,441 294,441 294,439 293,439 293,429 292,429 292,439 291,439 291,433 290,433 290,438 289,438 289,433 288,433 288,440 287,440 287,435 286,435 286,433 285,433 285,434 284,434 284,437 283,437 283,434 282,434 282,434 281,434 281,438 280,438 280,436 279,436 279,435 278,435 278,437 277,437 277,433 276,433 276,435 275,435 275,434 274,434 274,437 273,437 273,434 272,434 272,435 271,435 271,435 270,435 270,434 269,434 269,434 268,434 268,433 267,433 267,434 266,434 266,435 265,435 265,434 264,434 264,436 263,436 263,435 262,435 262,435 261,435 261,434 260,434 260,433 259,433 259,432 258,432 258,435 257,435 257,430 256,430 256,434 255,434 255,433 254,433 254,433 253,433 253,436 252,436 252,435 251,435 251,431 250,431 250,434 249,434 249,435 248,435 248,440 247,440 247,434 246,434 246,434 245,434 245,435 244,435 244,435 243,435 243,433 242,433 242,435 241,435 241,434 240,434 240,435 239,435 239,432 238,432 238,439 237,439 237,434 236,434 236,433 235,433 235,435 234,435 234,432 233,432 233,434 232,434 232,435 231,435 231,431 230,431 230,434 229,434 229,433 228,433 228,434 227,434 227,423 226,423 226,421 225,421 225,435 224,435 224,439 223,439 223,437 222,437 222,437 221,437 221,442 220,442 220,435 219,435 219,438 218,438 218,434 217,434 217,435 216,435 216,435 215,435 215,434 214,434 214,435 213,435 213,434 212,434 212,438 211,438 211,435 210,435 210,441 209,441 209,432 208,432 208,435 207,435 207,435 206,435 206,435 205,435 205,435 204,435 204,434 203,434 203,434 202,434 202,437 201,437 201,440 200,440 200,430 199,430 199,436 198,436 198,433 197,433 197,442 196,442 196,436 195,436 195,440 194,440 194,436 193,436 193,421 192,421 192,423 191,423 191,430 190,430 190,430 189,430 189,431 188,431 188,431 187,431 187,430 186,430 186,430 185,430 185,425 184,425 184,432 183,432 183,429 182,429 182,431 181,431 181,430 180,430 180,431 179,431 179,430 178,430 178,431 177,431 177,429 176,429 176,436 175,436 175,430 174,430 174,432 173,432 173,435 172,435 172,430 171,430 171,430 170,430 170,432 169,432 169,431 168,431 168,436 167,436 167,430 166,430 166,429 165,429 165,435 164,435 164,429 163,429 163,430 162,430 162,435 161,435 161,432 160,432 160,429 159,429 159,427 158,427 158,430 157,430 157,431 156,431 156,430 155,430 155,431 154,431 154,430 153,430 153,431 152,431 152,431 151,431 151,434 150,434 150,431 149,431 149,431 148,431 148,431 147,431 147,429 146,429 146,437 145,437 145,430 144,430 144,429 143,429" fill="#6464dc"/><rect x="134" y="415" width="9" height="1" fill="#3232c8"/></svg>
<svg style="position:absolute;left:0px;top:0px;" width="769" height="611" viewBox="0 0 769 611"><path d="M417.5 195.5 L446 211 L431 211 L431 228 L402.5 228 L402.5 211 L389 211 Z" fill="none" stroke="#e81c24" stroke-width="5" stroke-linejoin="round"/><path d="M283 256.5 H577.5" stroke="#e81c24" stroke-width="4" stroke-linecap="round"/></svg>
<div style="position:absolute;left:235px;top:232.7px;font-family:'Liberation Serif', serif;font-size:20.4px;line-height:20.4px;color:#fff;white-space:nowrap">Bấm và kéo chuột ngay trên này để chọn đoạn cần cắt</div>
<div style="position:absolute;left:235px;top:255.6px;font-family:'Liberation Serif', serif;font-size:20.4px;line-height:20.4px;color:#fff;white-space:nowrap">Bạn có thể nghe lại bằng nút Play sau khi đã chọn</div>
<div style="position:absolute;left:750px;top:189px;width:17px;height:323px;background:#cdcdcd;border-left:1px solid #fafafa"></div>
<div style="position:absolute;left:750px;top:189px;width:17px;height:17px;background:#f0f0f0"></div>
<svg style="position:absolute;left:753px;top:194px;" width="11" height="8" viewBox="0 0 11 8"><path d="M1.5 6.5 L5.5 2 L9.5 6.5" stroke="#606060" stroke-width="1.8" fill="none"/></svg>
<div style="position:absolute;left:750px;top:495px;width:17px;height:17px;background:#f0f0f0"></div>
<svg style="position:absolute;left:753px;top:500px;" width="11" height="8" viewBox="0 0 11 8"><path d="M1.5 1.5 L5.5 6 L9.5 1.5" stroke="#606060" stroke-width="1.8" fill="none"/></svg>
<div style="position:absolute;left:3px;top:512px;width:764px;height:17px;background:#f0f0f0;border-top:1px solid #fff"></div>
<div style="position:absolute;left:156px;top:513px;width:468px;height:15px;background:#cdcdcd"></div>
<svg style="position:absolute;left:141px;top:516px;" width="9" height="11" viewBox="0 0 9 11"><path d="M7 1.5 L2.5 5.5 L7 9.5" stroke="#606060" stroke-width="1.8" fill="none"/></svg>
<svg style="position:absolute;left:738px;top:516px;" width="9" height="11" viewBox="0 0 9 11"><path d="M2 1.5 L6.5 5.5 L2 9.5" stroke="#606060" stroke-width="1.8" fill="none"/></svg>
<div style="position:absolute;left:3px;top:529px;width:764px;height:1px;background:#a0a0a0"></div>
<div style="position:absolute;left:3px;top:585px;width:764px;height:1px;background:#a0a0a0"></div>
<div style="position:absolute;left:3px;top:530px;width:11px;height:55px;border-left:1px solid #a0a0a0;border-right:1px solid #a0a0a0"></div><div style="position:absolute;left:4px;top:530px;width:1px;height:55px;background:#fff"></div><div style="position:absolute;left:7px;top:535px;width:5px;height:1px;background:#8a8a8a"></div><div style="position:absolute;left:7px;top:539px;width:5px;height:1px;background:#8a8a8a"></div><div style="position:absolute;left:7px;top:543px;width:5px;height:1px;background:#8a8a8a"></div><div style="position:absolute;left:7px;top:547px;width:5px;height:1px;background:#8a8a8a"></div><div style="position:absolute;left:7px;top:551px;width:5px;height:1px;background:#8a8a8a"></div><div style="position:absolute;left:7px;top:555px;width:5px;height:1px;background:#8a8a8a"></div><div style="position:absolute;left:7px;top:559px;width:5px;height:1px;background:#8a8a8a"></div><div style="position:absolute;left:7px;top:563px;width:5px;height:1px;background:#8a8a8a"></div><div style="position:absolute;left:7px;top:567px;width:5px;height:1px;background:#8a8a8a"></div><div style="position:absolute;left:7px;top:571px;width:5px;height:1px;background:#8a8a8a"></div><div style="position:absolute;left:7px;top:575px;width:5px;height:1px;background:#8a8a8a"></div><div style="position:absolute;left:7px;top:579px;width:5px;height:1px;background:#8a8a8a"></div>
<div style="position:absolute;left:15.5px;top:538.22px;font-size:11.8px;line-height:11.8px;height:11.8px;color:#000;white-space:nowrap;"><span style="position:relative;top:0">Project Rate (Hz):</span></div>
<div style="position:absolute;left:15px;top:554px;width:80px;height:23px;background:#fff;border:1px solid #acacac"></div>
<div style="position:absolute;left:21.5px;top:558.64px;font-size:12px;line-height:12px;height:12px;color:#000;white-space:nowrap;"><span style="position:relative;top:0">44100</span></div>
<svg style="position:absolute;left:81px;top:561px;" width="9" height="7" viewBox="0 0 9 7"><path d="M1 1 L4.5 5 L8 1" stroke="#404040" stroke-width="1.6" fill="none"/></svg>
<div style="position:absolute;left:116px;top:552px;width:1px;height:25px;background:#a0a0a0"></div>
<div style="position:absolute;left:127.5px;top:559.64px;font-size:12px;line-height:12px;height:12px;color:#000;white-space:nowrap;"><span style="position:relative;top:0">Snap To</span></div>
<div style="position:absolute;left:175px;top:559px;width:13px;height:13px;background:#fff;border:1px solid #333"></div>
<div style="position:absolute;left:194.3px;top:537.54px;font-size:12px;line-height:12px;height:12px;color:#000;white-space:nowrap;"><span style="position:relative;top:0">Selection Start:</span></div>
<div style="position:absolute;left:194px;top:554px;width:150px;height:21px;background:#c0c0c0;border-top:2px solid #808080;border-left:2px solid #808080;border-right:1px solid #fff;border-bottom:1px solid #fff"></div>
<div style="position:absolute;left:334px;top:556px;width:9px;height:18px;background:#dcdcdc;border-left:1px solid #fff"></div>
<svg style="position:absolute;left:335px;top:562px;" width="7" height="5" viewBox="0 0 7 5"><path d="M0 0 H7 L3.5 4.5 Z" fill="#000"/></svg>
<div style="position:absolute;left:198.1px;top:559.64px;font-size:12px;line-height:12px;height:12px;color:#1a1ac8;white-space:nowrap;"><span style="position:relative;top:0">0</span></div><div style="position:absolute;left:208.1px;top:559.64px;font-size:12px;line-height:12px;height:12px;color:#1a1ac8;white-space:nowrap;"><span style="position:relative;top:0">0</span></div><div style="position:absolute;left:220.6px;top:559.64px;font-size:12px;line-height:12px;height:12px;color:#000;white-space:nowrap;"><span style="position:relative;top:0">h</span></div><div style="position:absolute;left:233.1px;top:559.64px;font-size:12px;line-height:12px;height:12px;color:#1a1ac8;white-space:nowrap;"><span style="position:relative;top:0">0</span></div><div style="position:absolute;left:243.1px;top:559.64px;font-size:12px;line-height:12px;height:12px;color:#1a1ac8;white-space:nowrap;"><span style="position:relative;top:0">1</span></div><div style="position:absolute;left:255.6px;top:559.64px;font-size:12px;line-height:12px;height:12px;color:#000;white-space:nowrap;"><span style="position:relative;top:0">m</span></div><div style="position:absolute;left:271.0px;top:559.64px;font-size:12px;line-height:12px;height:12px;color:#1a1ac8;white-space:nowrap;"><span style="position:relative;top:0">0</span></div><div style="position:absolute;left:280.9px;top:559.64px;font-size:12px;line-height:12px;height:12px;color:#1a1ac8;white-space:nowrap;"><span style="position:relative;top:0">0</span></div><div style="position:absolute;left:289.9px;top:559.64px;font-size:12px;line-height:12px;height:12px;color:#000;white-space:nowrap;"><span style="position:relative;top:0">.</span></div><div style="position:absolute;left:294.4px;top:559.64px;font-size:12px;line-height:12px;height:12px;color:#1a1ac8;white-space:nowrap;"><span style="position:relative;top:0">6</span></div><div style="position:absolute;left:305.9px;top:559.64px;font-size:12px;line-height:12px;height:12px;color:#1a1ac8;white-space:nowrap;"><span style="position:relative;top:0">4</span></div><div style="position:absolute;left:315.29999999999995px;top:559.64px;font-size:12px;line-height:12px;height:12px;color:#1a1ac8;white-space:nowrap;"><span style="position:relative;top:0">8</span></div><div style="position:absolute;left:327.79999999999995px;top:559.64px;font-size:12px;line-height:12px;height:12px;color:#000;white-space:nowrap;"><span style="position:relative;top:0">s</span></div>
<svg style="position:absolute;left:351px;top:538px;" width="13" height="13" viewBox="0 0 13 13"><circle cx="6.5" cy="6.5" r="5.8" fill="#fff" stroke="#333" stroke-width="1"/><circle cx="6.5" cy="6.5" r="3.2" fill="#000"/></svg>
<div style="position:absolute;left:367.3px;top:537.54px;font-size:12px;line-height:12px;height:12px;color:#000;white-space:nowrap;"><span style="position:relative;top:0">End</span></div>
<svg style="position:absolute;left:397px;top:538px;" width="13" height="13" viewBox="0 0 13 13"><circle cx="6.5" cy="6.5" r="5.8" fill="#fff" stroke="#333" stroke-width="1"/></svg>
<div style="position:absolute;left:413.3px;top:537.54px;font-size:12px;line-height:12px;height:12px;color:#000;white-space:nowrap;"><span style="position:relative;top:0">Length</span></div>
<div style="position:absolute;left:352px;top:554px;width:126px;height:21px;background:#c0c0c0;border-top:2px solid #808080;border-left:2px solid #808080;border-right:1px solid #fff;border-bottom:1px solid #fff"></div>
<div style="position:absolute;left:356.09999999999997px;top:559.64px;font-size:12px;line-height:12px;height:12px;color:#1a1ac8;white-space:nowrap;"><span style="position:relative;top:0">0</span></div><div style="position:absolute;left:366.09999999999997px;top:559.64px;font-size:12px;line-height:12px;height:12px;color:#1a1ac8;white-space:nowrap;"><span style="position:relative;top:0">0</span></div><div style="position:absolute;left:378.59999999999997px;top:559.64px;font-size:12px;line-height:12px;height:12px;color:#000;white-space:nowrap;"><span style="position:relative;top:0">h</span></div><div style="position:absolute;left:391.09999999999997px;top:559.64px;font-size:12px;line-height:12px;height:12px;color:#1a1ac8;white-space:nowrap;"><span style="position:relative;top:0">0</span></div><div style="position:absolute;left:401.09999999999997px;top:559.64px;font-size:12px;line-height:12px;height:12px;color:#1a1ac8;white-space:nowrap;"><span style="position:relative;top:0">2</span></div><div style="position:absolute;left:413.59999999999997px;top:559.64px;font-size:12px;line-height:12px;height:12px;color:#000;white-space:nowrap;"><span style="position:relative;top:0">m</span></div><div style="position:absolute;left:429.0px;top:559.64px;font-size:12px;line-height:12px;height:12px;color:#1a1ac8;white-space:nowrap;"><span style="position:relative;top:0">5</span></div><div style="position:absolute;left:438.9px;top:559.64px;font-size:12px;line-height:12px;height:12px;color:#1a1ac8;white-space:nowrap;"><span style="position:relative;top:0">9</span></div><div style="position:absolute;left:447.9px;top:559.64px;font-size:12px;line-height:12px;height:12px;color:#000;white-space:nowrap;"><span style="position:relative;top:0">.</span></div><div style="position:absolute;left:452.4px;top:559.64px;font-size:12px;line-height:12px;height:12px;color:#1a1ac8;white-space:nowrap;"><span style="position:relative;top:0">9</span></div><div style="position:absolute;left:463.9px;top:559.64px;font-size:12px;line-height:12px;height:12px;color:#1a1ac8;white-space:nowrap;"><span style="position:relative;top:0">0</span></div><div style="position:absolute;left:473.29999999999995px;top:559.64px;font-size:12px;line-height:12px;height:12px;color:#1a1ac8;white-space:nowrap;"><span style="position:relative;top:0">8</span></div>
<div style="position:absolute;left:478px;top:530px;width:254px;height:44px;background:#fff"></div>
<svg style="position:absolute;left:0px;top:0px;" width="769" height="611" viewBox="0 0 769 611"><defs><linearGradient id="ga" gradientUnits="userSpaceOnUse" x1="478" y1="531" x2="502.6" y2="612.6"><stop offset="0" stop-color="#e8007e"/><stop offset="0.25" stop-color="#24060e"/><stop offset="0.38" stop-color="#1c2000"/><stop offset="0.53" stop-color="#56c40c"/><stop offset="0.66" stop-color="#1c2400"/><stop offset="0.78" stop-color="#280612"/><stop offset="1" stop-color="#e8007e"/></linearGradient></defs><text x="500" y="548.7" textLength="102" lengthAdjust="spacingAndGlyphs" font-family="Liberation Serif" font-weight="bold" font-size="27.5" stroke-width="1.9" stroke-linejoin="round" fill="url(#ga)" stroke="url(#ga)">leminh</text><text x="600.5" y="548.7" textLength="115" lengthAdjust="spacingAndGlyphs" font-family="Liberation Serif" font-weight="bold" font-size="27.5" stroke-width="1.9" stroke-linejoin="round" fill="url(#ga)" stroke="url(#ga)">STORE.n</text><defs><linearGradient id="gb" gradientUnits="userSpaceOnUse" x1="478" y1="554" x2="502.6" y2="635.6"><stop offset="0" stop-color="#e8007e"/><stop offset="0.25" stop-color="#24060e"/><stop offset="0.38" stop-color="#1c2000"/><stop offset="0.53" stop-color="#56c40c"/><stop offset="0.66" stop-color="#1c2400"/><stop offset="0.78" stop-color="#280612"/><stop offset="1" stop-color="#e8007e"/></linearGradient></defs><text x="478" y="572.3" textLength="55.5" lengthAdjust="spacingAndGlyphs" font-family="Liberation Serif" font-weight="bold" font-size="27" stroke-width="2.1" stroke-linejoin="round" fill="url(#gb)" stroke="url(#gb)">0915</text><text x="544.5" y="572.3" textLength="29.3" lengthAdjust="spacingAndGlyphs" font-family="Liberation Serif" font-weight="bold" font-size="27" stroke-width="2.1" stroke-linejoin="round" fill="url(#gb)" stroke="url(#gb)">81</text><text x="577.8" y="572.3" textLength="31.2" lengthAdjust="spacingAndGlyphs" font-family="Liberation Serif" font-weight="bold" font-size="27" stroke-width="2.1" stroke-linejoin="round" fill="url(#gb)" stroke="url(#gb)">99</text><text x="616.5" y="572.3" textLength="31.1" lengthAdjust="spacingAndGlyphs" font-family="Liberation Serif" font-weight="bold" font-size="27" stroke-width="2.1" stroke-linejoin="round" fill="url(#gb)" stroke="url(#gb)">67</text><text x="653.3" y="572.3" textLength="81" lengthAdjust="spacingAndGlyphs" font-family="Liberation Serif" font-weight="bold" font-size="27" stroke-width="2.1" stroke-linejoin="round" fill="url(#gb)" stroke="url(#gb)">(zalo)</text></svg>
<div style="position:absolute;left:5.7px;top:592.82px;font-size:11.8px;line-height:11.8px;height:11.8px;color:#000;white-space:nowrap;"><span style="position:relative;top:0">Click and drag to select audio</span></div>
<div style="position:absolute;left:513px;top:587px;width:1px;height:22px;background:#a0a0a0"></div>
<div style="position:absolute;left:513px;top:588px;width:1px;height:20px;background:#a0a0a0"></div>
<div style="position:absolute;left:763px;top:599px;width:2px;height:2px;background:#a8a8a8"></div>
<div style="position:absolute;left:760px;top:602px;width:2px;height:2px;background:#a8a8a8"></div>
<div style="position:absolute;left:763px;top:602px;width:2px;height:2px;background:#a8a8a8"></div>
<div style="position:absolute;left:757px;top:605px;width:2px;height:2px;background:#a8a8a8"></div>
<div style="position:absolute;left:760px;top:605px;width:2px;height:2px;background:#a8a8a8"></div>
<div style="position:absolute;left:763px;top:605px;width:2px;height:2px;background:#a8a8a8"></div>
</body></html>
